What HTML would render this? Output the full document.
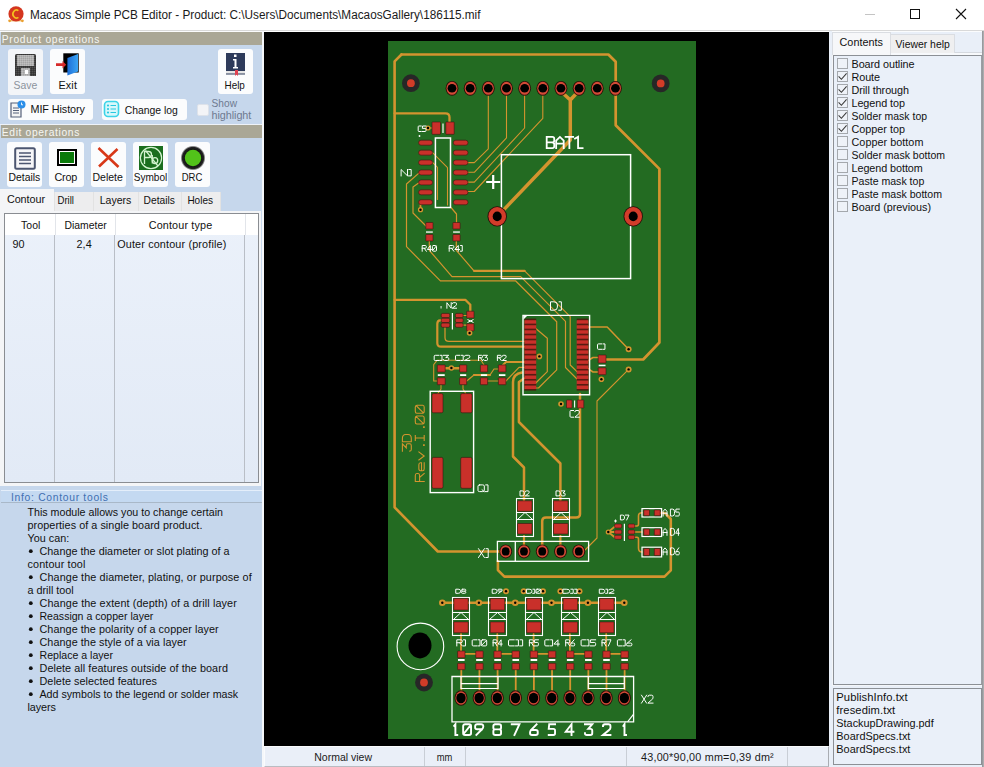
<!DOCTYPE html>
<html><head><meta charset="utf-8">
<style>
*{box-sizing:border-box;margin:0;padding:0}
html,body{width:984px;height:767px;overflow:hidden;background:#fff;font-family:"Liberation Sans",sans-serif;color:#000}
.a{position:absolute}
.t{position:absolute;white-space:pre;line-height:1}
.hdr{position:absolute;left:1px;width:261px;background:#aaa796;color:#f3f3f0;font-size:12px;line-height:13px;padding-left:1px;letter-spacing:0.2px}
.btn{position:absolute;background:#fbfcfd;border-radius:3px}
.btn.dis{background:#f3f5f8}
.lbl{position:absolute;font-size:11.5px;line-height:1;white-space:pre;text-align:center;left:0;right:0}
.tab{position:absolute;background:#f0f0f0;border:1px solid #dcdcdc;border-bottom:none;font-size:11.5px;line-height:1;white-space:pre}
.cb{position:absolute;width:11px;height:11px;border:1px solid #a4a8ad;background:#eef2f8}
.cl{position:absolute;font-size:11px;line-height:1;white-space:pre}
</style></head><body>
<!-- title bar -->
<div class="a" style="left:0;top:0;width:984px;height:30px;background:#fff"></div>
<svg class="a" style="left:7px;top:5px" width="18" height="18" viewBox="0 0 18 18">
 <path d="M2.5 15.8 H15.5" stroke="#e9a030" stroke-width="1"/>
 <circle cx="9" cy="8.8" r="7.6" fill="#d4361f"/>
 <circle cx="2.6" cy="15.8" r="1.4" fill="#eaa030"/><circle cx="15.4" cy="15.8" r="1.4" fill="#eaa030"/>
 <path d="M11.4 5.6 A3.6 4 0 1 0 11.4 12.4" fill="none" stroke="#f4c020" stroke-width="1.6"/>
</svg>
<div class="a" style="left:865px;top:14px;width:10px;height:1px;background:#c4c4c4"></div>
<div class="a" style="left:910px;top:9px;width:10px;height:10px;border:1px solid #111"></div>
<svg class="a" style="left:955px;top:8px" width="12" height="12" viewBox="0 0 12 12"><path d="M1 1L11 11M11 1L1 11" stroke="#111" stroke-width="1.1"/></svg>
<div class="a" style="left:0;top:30px;width:984px;height:1px;background:#d9d9d9"></div>

<!-- left panel -->
<div class="a" style="left:0;top:31px;width:263px;height:736px;background:#c6d7ec"></div>
<div class="a" style="left:262px;top:31px;width:2px;height:736px;background:#f5f7fa"></div>
<div class="a" style="left:0;top:31px;width:262px;height:1px;background:#fbfcfd"></div>
<div class="hdr" style="top:32px;height:13px"></div>
<div class="a" style="left:0;top:124px;width:262px;height:1px;background:#eef2f8"></div>
<div class="hdr" style="top:125px;height:13px"></div>

<!-- product ops buttons -->
<div class="btn dis" style="left:8px;top:49px;width:35px;height:46px"></div>
<svg class="a" style="left:14px;top:53px" width="24" height="24" viewBox="0 0 24 24">
 <defs><pattern id="dots" width="2" height="2" patternUnits="userSpaceOnUse"><rect width="2" height="2" fill="#fff"/><rect x="0.5" y="0.5" width="1.1" height="1.1" fill="#000"/></pattern>
 <pattern id="dots2" width="2" height="2" patternUnits="userSpaceOnUse"><rect width="2" height="2" fill="#222"/><rect x="0.5" y="0.5" width="0.8" height="0.8" fill="#ddd"/></pattern></defs>
 <path d="M2.5 1 H20.5 Q22 1 22 2.5 V23 H1 V2.5 Q1 1 2.5 1Z" fill="url(#dots2)"/>
 <rect x="3" y="2" width="17" height="11" fill="url(#dots)"/>
 <rect x="7" y="15" width="9" height="8" fill="url(#dots)"/>
 <rect x="11" y="17" width="3" height="4" fill="#fff"/>
</svg>

<div class="btn" style="left:50px;top:49px;width:35px;height:45px"></div>
<svg class="a" style="left:55px;top:52px" width="25" height="25" viewBox="0 0 25 25">
 <defs><linearGradient id="doorg" x1="0" x2="1" y1="0" y2="0"><stop offset="0" stop-color="#1f6fd8"/><stop offset="1" stop-color="#3aa4f4"/></linearGradient></defs>
 <rect x="8.3" y="1.3" width="15.4" height="19.2" fill="#000"/>
 <path d="M12.4 6 L23 2 V19.5 L12.4 23.6 Z" fill="url(#doorg)"/>
 <path d="M1 11.3 H7.5 V9 L11.2 12.7 L7.5 16.4 V14 H1 Z" fill="#d62a2a"/>
</svg>

<div class="btn" style="left:218px;top:49px;width:35px;height:45px"></div>
<svg class="a" style="left:225px;top:52px" width="21" height="26" viewBox="0 0 21 26">
 <rect x="1" y="1" width="19" height="18" fill="#2d3a5a"/>
 <path d="M1 19H20V22H1Z" fill="#e6e6e6"/>
 <path d="M1 22H20" stroke="#2d3a5a" stroke-width="1"/>
 <rect x="9" y="2.5" width="2.5" height="2.5" fill="#fff"/>
 <path d="M8 7H11.5V15H13V16.5H8V15H9.5V8.5H8Z" fill="#fff"/>
 <path d="M10 18H13V24L11.5 22.5L10 24Z" fill="#e04050"/>
</svg>

<div class="btn" style="left:8px;top:99px;width:85px;height:21px"></div>
<svg class="a" style="left:9px;top:100px" width="17" height="18" viewBox="0 0 17 18">
 <path d="M2 3H9L12 6V17H2Z" fill="#f4f4f4" stroke="#55607a" stroke-width="1.2"/>
 <path d="M4 8H10M4 10.5H10M4 13H10" stroke="#55607a" stroke-width="1"/>
 <circle cx="12.5" cy="4.5" r="4" fill="#2a8ee8"/>
 <path d="M12.5 2.5V4.8H14" stroke="#fff" stroke-width="0.9" fill="none"/>
</svg>

<div class="btn" style="left:102px;top:99px;width:85px;height:21px"></div>
<svg class="a" style="left:103px;top:100px" width="17" height="18" viewBox="0 0 17 18">
 <rect x="1.5" y="1.5" width="14" height="15" rx="3.5" fill="#d8f8fb" stroke="#3cd4e8" stroke-width="1.6"/>
 <circle cx="5" cy="5.5" r="1.1" fill="#28c8e0"/><circle cx="5" cy="9" r="1.1" fill="#28c8e0"/><circle cx="5" cy="12.5" r="1.1" fill="#28c8e0"/>
 <path d="M7.5 5.5H13M7.5 9H13M7.5 12.5H13" stroke="#28c8e0" stroke-width="1.2"/>
</svg>

<div class="a" style="left:197px;top:104px;width:12px;height:12px;background:#f3f4f7;border:1px solid #dde2ea;border-radius:2px"></div>

<!-- edit ops buttons -->
<div class="btn" style="left:7px;top:142px;width:35px;height:45px"></div>
<svg class="a" style="left:14px;top:147px" width="22" height="23" viewBox="0 0 22 23">
 <rect x="1.2" y="1.2" width="19.6" height="20.6" rx="1.5" fill="#f6f6f8" stroke="#4c5670" stroke-width="2"/>
 <path d="M5 6H17M5 9.5H17M5 13H17M5 16.5H17" stroke="#4c5670" stroke-width="1.6"/>
</svg>

<div class="btn" style="left:49px;top:142px;width:35px;height:45px"></div>
<svg class="a" style="left:56px;top:148px" width="22" height="19" viewBox="0 0 22 19">
 <rect x="1" y="1" width="20" height="17" fill="#000"/>
 <rect x="3" y="3" width="16" height="13" fill="#fff"/>
 <rect x="4" y="4" width="14" height="11" fill="#0a7a0a"/>
</svg>

<div class="btn" style="left:91px;top:142px;width:35px;height:45px"></div>
<svg class="a" style="left:96px;top:146px" width="25" height="23" viewBox="0 0 25 23">
 <path d="M2.5 2L22.5 21M21.5 3L3 20.5" stroke="#d83818" stroke-width="2.6" stroke-linecap="butt"/>
</svg>

<div class="btn" style="left:133px;top:142px;width:35px;height:45px"></div>
<svg class="a" style="left:139px;top:146px" width="24" height="24" viewBox="0 0 24 24">
 <rect x="0" y="0" width="24" height="24" fill="#1a6e1e"/>
 <circle cx="12" cy="12" r="10.6" fill="none" stroke="#d4f4d0" stroke-width="1.2"/>
 <path d="M5.5 18 V5.5 H9.5 Q12.5 5.5 12.5 8.5 Q12.5 11.5 9.5 11.5 H5.5" fill="none" stroke="#d4f4d0" stroke-width="1.3"/>
 <path d="M13.3 9 V17.5" stroke="#d4f4d0" stroke-width="1.3"/>
 <ellipse cx="16" cy="14.6" rx="2.7" ry="3" fill="none" stroke="#d4f4d0" stroke-width="1.3"/>
 <path d="M6.5 4.5 L19 20" stroke="#d4f4d0" stroke-width="1.2"/>
</svg>

<div class="btn" style="left:175px;top:142px;width:35px;height:45px"></div>
<svg class="a" style="left:180px;top:145px" width="26" height="26" viewBox="0 0 26 26">
 <defs><radialGradient id="drcg"><stop offset="0.62" stop-color="#111"/><stop offset="0.85" stop-color="#222"/><stop offset="1" stop-color="#222" stop-opacity="0"/></radialGradient></defs>
 <circle cx="13" cy="13" r="12.5" fill="url(#drcg)"/>
 <circle cx="13" cy="13" r="8.2" fill="#52c21a"/>
</svg>

<!-- tabs -->
<div class="a" style="left:0;top:189px;width:262px;height:297px;background:#c6d7ec"></div>
<div class="a" style="left:0;top:211px;width:261px;height:275px;background:#f4f5f7"></div>
<div class="a" style="left:0;top:189px;width:54px;height:23px;background:#f4f5f7"></div>
<div class="a" style="left:54px;top:192px;width:39px;height:19px;background:#ededee;border-left:1px solid #e2e2e2"></div>
<div class="a" style="left:93px;top:192px;width:45px;height:19px;background:#ededee;border-left:1px solid #e2e2e2"></div>
<div class="a" style="left:138px;top:192px;width:43px;height:19px;background:#ededee;border-left:1px solid #e2e2e2"></div>
<div class="a" style="left:181px;top:192px;width:40px;height:19px;background:#ededee;border-left:1px solid #e2e2e2;border-right:1px solid #e2e2e2"></div>

<!-- table -->
<div class="a" style="left:4px;top:213px;width:255px;height:270px;background:linear-gradient(#ebf1fa,#e2eaf6);border:1px solid #8a8d92"></div>
<div class="a" style="left:5px;top:214px;width:253px;height:21px;background:#fff"></div>
<div class="a" style="left:54px;top:235px;width:1px;height:247px;background:#b9bec6"></div><div class="a" style="left:55px;top:214px;width:1px;height:21px;background:#e2e5ea"></div>
<div class="a" style="left:114px;top:235px;width:1px;height:247px;background:#b9bec6"></div><div class="a" style="left:115px;top:214px;width:1px;height:21px;background:#e2e5ea"></div>
<div class="a" style="left:244px;top:235px;width:1px;height:247px;background:#b9bec6"></div><div class="a" style="left:245px;top:214px;width:1px;height:21px;background:#e2e5ea"></div>

<!-- info -->
<div class="a" style="left:1px;top:490px;width:261px;height:13px;background:#c4d9f1;border-top:1px solid #e4eefa;border-bottom:1px solid #a9b8c8"></div>


<!-- canvas -->
<div class="a" style="left:264px;top:32px;width:565px;height:714px;background:#000"></div>
<svg class="a" style="left:0;top:0" width="984" height="767" viewBox="0 0 984 767">
<rect x="388" y="41" width="308" height="698" fill="#236b22"/>
<path d="M401.5 54.5 H608.4 L615.7 61.8 V125.2 L659.4 168.9 V342.5 L643.2 359.5 H604" fill="none" stroke="#d3942f" stroke-width="2.7" stroke-linejoin="round" stroke-linecap="round"/>
<path d="M401.5 54.5 L394.6 61.4 V507.3 L437.8 551.5 H505" fill="none" stroke="#d3942f" stroke-width="2.6" stroke-linejoin="round" stroke-linecap="round"/>
<path d="M394.6 113.3 H445.5 Q449.5 113.3 449.5 117.3 V128" fill="none" stroke="#d3942f" stroke-width="2.3" stroke-linejoin="round" stroke-linecap="round"/>
<path d="M394.6 299.8 H465.3 L470.3 304.8 V313" fill="none" stroke="#d3942f" stroke-width="2.3" stroke-linejoin="round" stroke-linecap="round"/>
<path d="M488.3 92 V148.9 L474.3 162.6 H466" fill="none" stroke="#d3942f" stroke-width="1.1" stroke-linejoin="round" stroke-linecap="round"/>
<path d="M506.5 92 V137.8 L474.3 172.3 H466" fill="none" stroke="#d3942f" stroke-width="1.1" stroke-linejoin="round" stroke-linecap="round"/>
<path d="M524.6 92 V128 L474.3 182.1 H466" fill="none" stroke="#d3942f" stroke-width="1.1" stroke-linejoin="round" stroke-linecap="round"/>
<path d="M542.8 92 V118.3 L474.3 191.5 H466" fill="none" stroke="#d3942f" stroke-width="1.1" stroke-linejoin="round" stroke-linecap="round"/>
<path d="M560.5 91 L570.3 100 M578.7 91 L570.3 100 V140 L497.4 216.4" fill="none" stroke="#d3942f" stroke-width="3.5" stroke-linejoin="round" stroke-linecap="round"/>
<path d="M420 172.1 L406.5 184 V246.7 L440.4 280.8 H515.5 L556.7 321.8 V369.9 L538.5 388 H534" fill="none" stroke="#d3942f" stroke-width="1.2" stroke-linejoin="round" stroke-linecap="round"/>
<path d="M420 182 L413 187 V213 L426 226" fill="none" stroke="#d3942f" stroke-width="1.2" stroke-linejoin="round" stroke-linecap="round"/>
<path d="M429.3 240 V250.3 L452 276.6 H520.7 L565.5 321.4 V367.5 L577 379" fill="none" stroke="#d3942f" stroke-width="1.2" stroke-linejoin="round" stroke-linecap="round"/>
<path d="M456.3 240 V250.3 L474 270.8 H524.6 L570.2 316.6 V365 L577 371.6" fill="none" stroke="#d3942f" stroke-width="1.2" stroke-linejoin="round" stroke-linecap="round"/>
<path d="M474 270.8 H524.6" fill="none" stroke="#d3942f" stroke-width="2.3" stroke-linejoin="round" stroke-linecap="round"/>
<path d="M451 207.5 L456.5 214 V226" fill="none" stroke="#d3942f" stroke-width="1.2" stroke-linejoin="round" stroke-linecap="round"/>
<path d="M420.5 202.3 V209.7" fill="none" stroke="#d3942f" stroke-width="1.8" stroke-linejoin="round" stroke-linecap="round"/>
<path d="M432.5 152.6 L447.5 167.6 V205" fill="none" stroke="#d3942f" stroke-width="1.1" stroke-linejoin="round" stroke-linecap="round"/>
<path d="M432.5 162.4 L437.5 167.4 V199.5" fill="none" stroke="#d3942f" stroke-width="1.1" stroke-linejoin="round" stroke-linecap="round"/>
<path d="M441.2 320.4 H440 Q437.3 320.4 437.3 324 V343 Q437.3 346.7 441 346.7 H524" fill="none" stroke="#d3942f" stroke-width="2.2" stroke-linejoin="round" stroke-linecap="round"/>
<path d="M445 325.2 V337.5 Q445 341.4 449 341.4 H524" fill="none" stroke="#d3942f" stroke-width="1.3" stroke-linejoin="round" stroke-linecap="round"/>
<path d="M463 315.5 H467 M463 325.2 H467" fill="none" stroke="#d3942f" stroke-width="1.2" stroke-linejoin="round" stroke-linecap="round"/>
<path d="M445.2 368.2 H459.6" fill="none" stroke="#d3942f" stroke-width="2.4" stroke-linejoin="round" stroke-linecap="round"/>
<path d="M437.3 381 H433.7 V364.6 L437 360.3 H481 L484 365" fill="none" stroke="#d3942f" stroke-width="1.1" stroke-linejoin="round" stroke-linecap="round"/>
<path d="M466.7 381 L474 375 H490 L494 369 H499" fill="none" stroke="#d3942f" stroke-width="1.2" stroke-linejoin="round" stroke-linecap="round"/>
<path d="M474 375 H490" fill="none" stroke="#d3942f" stroke-width="2.2" stroke-linejoin="round" stroke-linecap="round"/>
<path d="M487.6 381 H499" fill="none" stroke="#d3942f" stroke-width="1.2" stroke-linejoin="round" stroke-linecap="round"/>
<path d="M505.9 381 L519 367.4 H524" fill="none" stroke="#d3942f" stroke-width="1.2" stroke-linejoin="round" stroke-linecap="round"/>
<path d="M503 365 L506 362 H524" fill="none" stroke="#d3942f" stroke-width="2.0" stroke-linejoin="round" stroke-linecap="round"/>
<path d="M441 384.7 V389 L437.5 394 M463 384.7 V389 L466 394" fill="none" stroke="#d3942f" stroke-width="1.1" stroke-linejoin="round" stroke-linecap="round"/>
<path d="M534 327 L547.3 338.2 V371.6 L536 382.8" fill="none" stroke="#d3942f" stroke-width="1.2" stroke-linejoin="round" stroke-linecap="round"/>
<path d="M588 327 H607.2 L628.6 349.3" fill="none" stroke="#d3942f" stroke-width="1.5" stroke-linejoin="round" stroke-linecap="round"/>
<path d="M588 360.5 L593 357.5 H599 M588 368.7 L593 372 H599" fill="none" stroke="#d3942f" stroke-width="1.6" stroke-linejoin="round" stroke-linecap="round"/>
<path d="M580 394 V514 Q580 517.5 576 517.5 H546 Q542.2 517.5 542.2 521 V546" fill="none" stroke="#d3942f" stroke-width="2.5" stroke-linejoin="round" stroke-linecap="round"/>
<path d="M522 372.5 Q513 374 513 382 V456.5 L524 467.5 V500" fill="none" stroke="#d3942f" stroke-width="2.5" stroke-linejoin="round" stroke-linecap="round"/>
<path d="M524 378.5 L518.9 382 V422 L560.4 463.5 V500" fill="none" stroke="#d3942f" stroke-width="2.5" stroke-linejoin="round" stroke-linecap="round"/>
<path d="M524 536 V546 M560.4 536 V546" fill="none" stroke="#d3942f" stroke-width="2.2" stroke-linejoin="round" stroke-linecap="round"/>
<path d="M628.6 369.4 L597 401 V538 L584.5 550.5" fill="none" stroke="#d3942f" stroke-width="1.1" stroke-linejoin="round" stroke-linecap="round"/>
<path d="M497.9 561 V570.1 L504.4 576.6 H664.5 L670.8 570.3 V519 L665 513 H661" fill="none" stroke="#d3942f" stroke-width="2.6" stroke-linejoin="round" stroke-linecap="round"/>
<path d="M634.7 526 H637 Q638.5 526 638.5 524 V516 Q638.5 512.8 642 512.8" fill="none" stroke="#d3942f" stroke-width="1.6" stroke-linejoin="round" stroke-linecap="round"/>
<path d="M634.7 532 H642" fill="none" stroke="#d3942f" stroke-width="1.6" stroke-linejoin="round" stroke-linecap="round"/>
<path d="M634.7 537.3 H637 Q638.5 537.3 638.5 539.3 V548 Q638.5 552 642 552" fill="none" stroke="#d3942f" stroke-width="1.6" stroke-linejoin="round" stroke-linecap="round"/>
<path d="M608.3 532 L615 526.4 M608.3 532 H615 M608.3 532 L615 537.5" fill="none" stroke="#d3942f" stroke-width="1.8" stroke-linejoin="round" stroke-linecap="round"/>
<path d="M442 602.7 H624.3" fill="none" stroke="#d3942f" stroke-width="2.6" stroke-linejoin="round" stroke-linecap="round"/>
<path d="M461.00 634 V652" fill="none" stroke="#d3942f" stroke-width="1.8" stroke-linejoin="round" stroke-linecap="round"/>
<path d="M497.30 634 V652" fill="none" stroke="#d3942f" stroke-width="1.8" stroke-linejoin="round" stroke-linecap="round"/>
<path d="M533.60 634 V652" fill="none" stroke="#d3942f" stroke-width="1.8" stroke-linejoin="round" stroke-linecap="round"/>
<path d="M569.90 634 V652" fill="none" stroke="#d3942f" stroke-width="1.8" stroke-linejoin="round" stroke-linecap="round"/>
<path d="M606.20 634 V652" fill="none" stroke="#d3942f" stroke-width="1.8" stroke-linejoin="round" stroke-linecap="round"/>
<path d="M461.30 668 V692" fill="none" stroke="#d3942f" stroke-width="1.8" stroke-linejoin="round" stroke-linecap="round"/>
<path d="M479.45 668 V692" fill="none" stroke="#d3942f" stroke-width="1.8" stroke-linejoin="round" stroke-linecap="round"/>
<path d="M497.60 668 V692" fill="none" stroke="#d3942f" stroke-width="1.8" stroke-linejoin="round" stroke-linecap="round"/>
<path d="M515.75 668 V692" fill="none" stroke="#d3942f" stroke-width="1.8" stroke-linejoin="round" stroke-linecap="round"/>
<path d="M533.90 668 V692" fill="none" stroke="#d3942f" stroke-width="1.8" stroke-linejoin="round" stroke-linecap="round"/>
<path d="M552.05 668 V692" fill="none" stroke="#d3942f" stroke-width="1.8" stroke-linejoin="round" stroke-linecap="round"/>
<path d="M570.20 668 V692" fill="none" stroke="#d3942f" stroke-width="1.8" stroke-linejoin="round" stroke-linecap="round"/>
<path d="M588.35 668 V692" fill="none" stroke="#d3942f" stroke-width="1.8" stroke-linejoin="round" stroke-linecap="round"/>
<path d="M606.50 668 V692" fill="none" stroke="#d3942f" stroke-width="1.8" stroke-linejoin="round" stroke-linecap="round"/>
<path d="M624.65 668 V692" fill="none" stroke="#d3942f" stroke-width="1.8" stroke-linejoin="round" stroke-linecap="round"/>
<path d="M461.30 653.9 H479.45" fill="none" stroke="#d3942f" stroke-width="1.6" stroke-linejoin="round" stroke-linecap="round"/>
<path d="M497.60 653.9 H515.75" fill="none" stroke="#d3942f" stroke-width="1.6" stroke-linejoin="round" stroke-linecap="round"/>
<path d="M533.90 653.9 H552.05" fill="none" stroke="#d3942f" stroke-width="1.6" stroke-linejoin="round" stroke-linecap="round"/>
<path d="M570.20 653.9 H588.35" fill="none" stroke="#d3942f" stroke-width="1.6" stroke-linejoin="round" stroke-linecap="round"/>
<path d="M606.50 653.9 H624.65" fill="none" stroke="#d3942f" stroke-width="1.6" stroke-linejoin="round" stroke-linecap="round"/>
<path d="M428 128 H432" fill="none" stroke="#d3942f" stroke-width="1.2" stroke-linejoin="round" stroke-linecap="round"/>
<circle cx="410.9" cy="83.2" r="8.9" fill="#272727"/>
<circle cx="410.9" cy="83.2" r="3.9" fill="#d23c28"/>
<circle cx="660.7" cy="83.4" r="8.9" fill="#272727"/>
<circle cx="660.7" cy="83.4" r="3.9" fill="#d23c28"/>
<circle cx="424" cy="682.5" r="8.9" fill="#272727"/>
<circle cx="424" cy="682.5" r="3.9" fill="#d23c28"/>
<circle cx="420.4" cy="646.4" r="23.3" fill="none" stroke="#ffffff" stroke-width="1.1"/>
<ellipse cx="420" cy="645.5" rx="11.5" ry="12.9" fill="#000"/>
<ellipse cx="452.00" cy="88.30" rx="6.4" ry="7.4" fill="#2a0e08"/>
<ellipse cx="452.00" cy="88.30" rx="5.5" ry="6.5" fill="#d24a36"/>
<ellipse cx="452.00" cy="88.30" rx="4.4" ry="4.3" fill="#000"/>
<ellipse cx="470.16" cy="88.30" rx="6.4" ry="7.4" fill="#2a0e08"/>
<ellipse cx="470.16" cy="88.30" rx="5.5" ry="6.5" fill="#d24a36"/>
<ellipse cx="470.16" cy="88.30" rx="4.4" ry="4.3" fill="#000"/>
<ellipse cx="488.32" cy="88.30" rx="6.4" ry="7.4" fill="#2a0e08"/>
<ellipse cx="488.32" cy="88.30" rx="5.5" ry="6.5" fill="#d24a36"/>
<ellipse cx="488.32" cy="88.30" rx="4.4" ry="4.3" fill="#000"/>
<ellipse cx="506.48" cy="88.30" rx="6.4" ry="7.4" fill="#2a0e08"/>
<ellipse cx="506.48" cy="88.30" rx="5.5" ry="6.5" fill="#d24a36"/>
<ellipse cx="506.48" cy="88.30" rx="4.4" ry="4.3" fill="#000"/>
<ellipse cx="524.64" cy="88.30" rx="6.4" ry="7.4" fill="#2a0e08"/>
<ellipse cx="524.64" cy="88.30" rx="5.5" ry="6.5" fill="#d24a36"/>
<ellipse cx="524.64" cy="88.30" rx="4.4" ry="4.3" fill="#000"/>
<ellipse cx="542.80" cy="88.30" rx="6.4" ry="7.4" fill="#2a0e08"/>
<ellipse cx="542.80" cy="88.30" rx="5.5" ry="6.5" fill="#d24a36"/>
<ellipse cx="542.80" cy="88.30" rx="4.4" ry="4.3" fill="#000"/>
<ellipse cx="560.96" cy="88.30" rx="6.4" ry="7.4" fill="#2a0e08"/>
<ellipse cx="560.96" cy="88.30" rx="5.5" ry="6.5" fill="#d24a36"/>
<ellipse cx="560.96" cy="88.30" rx="4.4" ry="4.3" fill="#000"/>
<ellipse cx="579.12" cy="88.30" rx="6.4" ry="7.4" fill="#2a0e08"/>
<ellipse cx="579.12" cy="88.30" rx="5.5" ry="6.5" fill="#d24a36"/>
<ellipse cx="579.12" cy="88.30" rx="4.4" ry="4.3" fill="#000"/>
<ellipse cx="597.28" cy="88.30" rx="6.4" ry="7.4" fill="#2a0e08"/>
<ellipse cx="597.28" cy="88.30" rx="5.5" ry="6.5" fill="#d24a36"/>
<ellipse cx="597.28" cy="88.30" rx="4.4" ry="4.3" fill="#000"/>
<ellipse cx="615.44" cy="88.30" rx="6.4" ry="7.4" fill="#2a0e08"/>
<ellipse cx="615.44" cy="88.30" rx="5.5" ry="6.5" fill="#d24a36"/>
<ellipse cx="615.44" cy="88.30" rx="4.4" ry="4.3" fill="#000"/>
<rect x="501.40" y="154.70" width="129.20" height="123.90" fill="none" stroke="#ffffff" stroke-width="1.5"/>
<ellipse cx="497.20" cy="216.40" rx="9.700000000000001" ry="10.200000000000001" fill="#2a0e08"/>
<ellipse cx="497.20" cy="216.40" rx="8.8" ry="9.3" fill="#d23c2a"/>
<ellipse cx="497.20" cy="216.40" rx="4.5" ry="4.9" fill="#000"/>
<ellipse cx="633.20" cy="216.40" rx="9.700000000000001" ry="10.200000000000001" fill="#2a0e08"/>
<ellipse cx="633.20" cy="216.40" rx="8.8" ry="9.3" fill="#d23c2a"/>
<ellipse cx="633.20" cy="216.40" rx="4.5" ry="4.9" fill="#000"/>
<path d="M486.2 182 H500.2 M493.2 175 V189" fill="none" stroke="#ffffff" stroke-width="2.2"/>
<rect x="432.00" y="122.00" width="8.50" height="12.30" rx="0.5" fill="#c9302a" stroke="#3a1410" stroke-width="0.6"/>
<rect x="445.80" y="122.00" width="8.40" height="12.30" rx="0.5" fill="#c9302a" stroke="#3a1410" stroke-width="0.6"/>
<path d="M443 123.5 V133" fill="none" stroke="#ffffff" stroke-width="1.2"/>
<circle cx="428.00" cy="128.00" r="2.6" fill="#d3942f"/>
<circle cx="428.00" cy="128.00" r="1.2" fill="#000"/>
<rect x="418.60" y="140.20" width="13.90" height="5.00" rx="2.5" fill="#c9302a" stroke="#3a1410" stroke-width="0.6"/>
<rect x="453.30" y="140.20" width="14.70" height="5.00" rx="2.5" fill="#c9302a" stroke="#3a1410" stroke-width="0.6"/>
<rect x="418.60" y="150.13" width="13.90" height="5.00" rx="2.5" fill="#c9302a" stroke="#3a1410" stroke-width="0.6"/>
<rect x="453.30" y="150.13" width="14.70" height="5.00" rx="2.5" fill="#c9302a" stroke="#3a1410" stroke-width="0.6"/>
<rect x="418.60" y="160.06" width="13.90" height="5.00" rx="2.5" fill="#c9302a" stroke="#3a1410" stroke-width="0.6"/>
<rect x="453.30" y="160.06" width="14.70" height="5.00" rx="2.5" fill="#c9302a" stroke="#3a1410" stroke-width="0.6"/>
<rect x="418.60" y="169.99" width="13.90" height="5.00" rx="2.5" fill="#c9302a" stroke="#3a1410" stroke-width="0.6"/>
<rect x="453.30" y="169.99" width="14.70" height="5.00" rx="2.5" fill="#c9302a" stroke="#3a1410" stroke-width="0.6"/>
<rect x="418.60" y="179.92" width="13.90" height="5.00" rx="2.5" fill="#c9302a" stroke="#3a1410" stroke-width="0.6"/>
<rect x="453.30" y="179.92" width="14.70" height="5.00" rx="2.5" fill="#c9302a" stroke="#3a1410" stroke-width="0.6"/>
<rect x="418.60" y="189.85" width="13.90" height="5.00" rx="2.5" fill="#c9302a" stroke="#3a1410" stroke-width="0.6"/>
<rect x="453.30" y="189.85" width="14.70" height="5.00" rx="2.5" fill="#c9302a" stroke="#3a1410" stroke-width="0.6"/>
<rect x="418.60" y="199.78" width="13.90" height="5.00" rx="2.5" fill="#c9302a" stroke="#3a1410" stroke-width="0.6"/>
<rect x="453.30" y="199.78" width="14.70" height="5.00" rx="2.5" fill="#c9302a" stroke="#3a1410" stroke-width="0.6"/>
<path d="M435.4 138 H450.5 V207.5 H435.4 Z" fill="none" stroke="#ffffff" stroke-width="1.5"/>
<circle cx="419.5" cy="136" r="0.9" fill="#ffffff"/>
<circle cx="420.50" cy="209.70" r="2.6" fill="#d3942f"/>
<circle cx="420.50" cy="209.70" r="1.2" fill="#000"/>
<rect x="425.80" y="222.50" width="7.20" height="6.50" rx="0.5" fill="#c9302a" stroke="#3a1410" stroke-width="0.6"/>
<rect x="425.80" y="234.50" width="7.20" height="6.50" rx="0.5" fill="#c9302a" stroke="#3a1410" stroke-width="0.6"/>
<rect x="426.0" y="231.4" width="6.8" height="1.3" fill="#ffffff"/>
<rect x="452.90" y="222.50" width="7.20" height="6.50" rx="0.5" fill="#c9302a" stroke="#3a1410" stroke-width="0.6"/>
<rect x="452.90" y="234.50" width="7.20" height="6.50" rx="0.5" fill="#c9302a" stroke="#3a1410" stroke-width="0.6"/>
<rect x="453.1" y="231.4" width="6.8" height="1.3" fill="#ffffff"/>
<rect x="441.20" y="313.40" width="8.60" height="4.20" rx="1.5" fill="#c9302a" stroke="#3a1410" stroke-width="0.6"/>
<rect x="455.30" y="313.40" width="7.90" height="4.20" rx="1.5" fill="#c9302a" stroke="#3a1410" stroke-width="0.6"/>
<rect x="441.20" y="318.30" width="8.60" height="4.20" rx="1.5" fill="#c9302a" stroke="#3a1410" stroke-width="0.6"/>
<rect x="455.30" y="318.30" width="7.90" height="4.20" rx="1.5" fill="#c9302a" stroke="#3a1410" stroke-width="0.6"/>
<rect x="441.20" y="323.10" width="8.60" height="4.20" rx="1.5" fill="#c9302a" stroke="#3a1410" stroke-width="0.6"/>
<rect x="455.30" y="323.10" width="7.90" height="4.20" rx="1.5" fill="#c9302a" stroke="#3a1410" stroke-width="0.6"/>
<path d="M452.4 313 V329.5" fill="none" stroke="#ffffff" stroke-width="1.2"/>
<rect x="466.70" y="311.20" width="7.30" height="6.80" rx="0.5" fill="#c9302a" stroke="#3a1410" stroke-width="0.6"/>
<rect x="466.70" y="323.70" width="7.30" height="7.20" rx="0.5" fill="#c9302a" stroke="#3a1410" stroke-width="0.6"/>
<path d="M467.5 319.5 L473.5 322.5 M467.5 322.5 L473.5 319.5" fill="none" stroke="#ffffff" stroke-width="1.0"/>
<circle cx="469.60" cy="333.00" r="2.8" fill="#d3942f"/>
<circle cx="469.60" cy="333.00" r="1.2" fill="#000"/>
<rect x="440.6" y="306" width="0.9" height="2.5" fill="#ffffff"/>
<rect x="437.30" y="364.90" width="7.90" height="7.10" rx="0.5" fill="#c9302a" stroke="#3a1410" stroke-width="0.6"/>
<rect x="437.30" y="377.80" width="7.90" height="6.90" rx="0.5" fill="#c9302a" stroke="#3a1410" stroke-width="0.6"/>
<rect x="437.8" y="374.2" width="6.9" height="1.8" fill="#ffffff"/>
<rect x="459.60" y="364.90" width="7.10" height="7.10" rx="0.5" fill="#c9302a" stroke="#3a1410" stroke-width="0.6"/>
<rect x="459.60" y="377.80" width="7.10" height="6.90" rx="0.5" fill="#c9302a" stroke="#3a1410" stroke-width="0.6"/>
<rect x="460.1" y="374.2" width="6.1" height="1.8" fill="#ffffff"/>
<rect x="480.40" y="364.90" width="7.20" height="7.10" rx="0.5" fill="#c9302a" stroke="#3a1410" stroke-width="0.6"/>
<rect x="480.40" y="377.80" width="7.20" height="6.90" rx="0.5" fill="#c9302a" stroke="#3a1410" stroke-width="0.6"/>
<rect x="480.9" y="374.2" width="6.2" height="1.8" fill="#ffffff"/>
<rect x="498.40" y="364.90" width="7.50" height="7.10" rx="0.5" fill="#c9302a" stroke="#3a1410" stroke-width="0.6"/>
<rect x="498.40" y="377.80" width="7.50" height="6.90" rx="0.5" fill="#c9302a" stroke="#3a1410" stroke-width="0.6"/>
<rect x="498.9" y="374.2" width="6.5" height="1.8" fill="#ffffff"/>
<circle cx="451.40" cy="368.00" r="2.8" fill="#d3942f"/>
<circle cx="451.40" cy="368.00" r="1.2" fill="#000"/>
<rect x="430.20" y="391.30" width="43.40" height="101.30" fill="none" stroke="#ffffff" stroke-width="1.4"/>
<rect x="432.00" y="393.60" width="11.00" height="19.20" rx="1.5" fill="#c9302a" stroke="#3a1410" stroke-width="0.6"/>
<rect x="460.70" y="393.60" width="11.30" height="19.20" rx="1.5" fill="#c9302a" stroke="#3a1410" stroke-width="0.6"/>
<rect x="432.00" y="457.40" width="11.00" height="30.90" rx="1.5" fill="#c9302a" stroke="#3a1410" stroke-width="0.6"/>
<rect x="460.70" y="457.40" width="11.30" height="30.90" rx="1.5" fill="#c9302a" stroke="#3a1410" stroke-width="0.6"/>
<rect x="524.4" y="319.4" width="11.8" height="70.4" rx="1.5" fill="#c9302a"/>
<rect x="524.4" y="318.60" width="11.8" height="1.6" fill="#4a1a10" opacity="0.9"/>
<rect x="524.4" y="323.63" width="11.8" height="1.6" fill="#4a1a10" opacity="0.9"/>
<rect x="524.4" y="328.66" width="11.8" height="1.6" fill="#4a1a10" opacity="0.9"/>
<rect x="524.4" y="333.69" width="11.8" height="1.6" fill="#4a1a10" opacity="0.9"/>
<rect x="524.4" y="338.72" width="11.8" height="1.6" fill="#4a1a10" opacity="0.9"/>
<rect x="524.4" y="343.75" width="11.8" height="1.6" fill="#4a1a10" opacity="0.9"/>
<rect x="524.4" y="348.78" width="11.8" height="1.6" fill="#4a1a10" opacity="0.9"/>
<rect x="524.4" y="353.81" width="11.8" height="1.6" fill="#4a1a10" opacity="0.9"/>
<rect x="524.4" y="358.84" width="11.8" height="1.6" fill="#4a1a10" opacity="0.9"/>
<rect x="524.4" y="363.87" width="11.8" height="1.6" fill="#4a1a10" opacity="0.9"/>
<rect x="524.4" y="368.90" width="11.8" height="1.6" fill="#4a1a10" opacity="0.9"/>
<rect x="524.4" y="373.93" width="11.8" height="1.6" fill="#4a1a10" opacity="0.9"/>
<rect x="524.4" y="378.96" width="11.8" height="1.6" fill="#4a1a10" opacity="0.9"/>
<rect x="524.4" y="383.99" width="11.8" height="1.6" fill="#4a1a10" opacity="0.9"/>
<rect x="524.4" y="389.02" width="11.8" height="1.6" fill="#4a1a10" opacity="0.9"/>
<rect x="576.7" y="319.4" width="11.8" height="70.4" rx="1.5" fill="#c9302a"/>
<rect x="576.7" y="318.60" width="11.8" height="1.6" fill="#4a1a10" opacity="0.9"/>
<rect x="576.7" y="323.63" width="11.8" height="1.6" fill="#4a1a10" opacity="0.9"/>
<rect x="576.7" y="328.66" width="11.8" height="1.6" fill="#4a1a10" opacity="0.9"/>
<rect x="576.7" y="333.69" width="11.8" height="1.6" fill="#4a1a10" opacity="0.9"/>
<rect x="576.7" y="338.72" width="11.8" height="1.6" fill="#4a1a10" opacity="0.9"/>
<rect x="576.7" y="343.75" width="11.8" height="1.6" fill="#4a1a10" opacity="0.9"/>
<rect x="576.7" y="348.78" width="11.8" height="1.6" fill="#4a1a10" opacity="0.9"/>
<rect x="576.7" y="353.81" width="11.8" height="1.6" fill="#4a1a10" opacity="0.9"/>
<rect x="576.7" y="358.84" width="11.8" height="1.6" fill="#4a1a10" opacity="0.9"/>
<rect x="576.7" y="363.87" width="11.8" height="1.6" fill="#4a1a10" opacity="0.9"/>
<rect x="576.7" y="368.90" width="11.8" height="1.6" fill="#4a1a10" opacity="0.9"/>
<rect x="576.7" y="373.93" width="11.8" height="1.6" fill="#4a1a10" opacity="0.9"/>
<rect x="576.7" y="378.96" width="11.8" height="1.6" fill="#4a1a10" opacity="0.9"/>
<rect x="576.7" y="383.99" width="11.8" height="1.6" fill="#4a1a10" opacity="0.9"/>
<rect x="576.7" y="389.02" width="11.8" height="1.6" fill="#4a1a10" opacity="0.9"/>
<path d="M523 315.4 H589.6 V394.7 H523 Z" fill="none" stroke="#ffffff" stroke-width="1.4"/>
<path d="M523.5 316 H527 L523.5 319.5 Z" fill="#ffffff"/>
<circle cx="539.40" cy="356.40" r="2.8" fill="#d3942f"/>
<circle cx="539.40" cy="356.40" r="1.2" fill="#000"/>
<rect x="598.20" y="355.00" width="7.80" height="8.00" rx="0.5" fill="#c9302a" stroke="#3a1410" stroke-width="0.6"/>
<rect x="598.20" y="367.80" width="7.80" height="6.90" rx="0.5" fill="#c9302a" stroke="#3a1410" stroke-width="0.6"/>
<rect x="598.7" y="364.7" width="6.8" height="1.5" fill="#ffffff"/>
<circle cx="601.40" cy="379.20" r="2.8" fill="#d3942f"/>
<circle cx="601.40" cy="379.20" r="1.2" fill="#000"/>
<circle cx="628.60" cy="349.30" r="3.0" fill="#d3942f"/>
<circle cx="628.60" cy="349.30" r="1.2" fill="#000"/>
<circle cx="628.60" cy="369.40" r="3.0" fill="#d3942f"/>
<circle cx="628.60" cy="369.40" r="1.2" fill="#000"/>
<rect x="566.50" y="400.00" width="5.50" height="8.00" rx="0.5" fill="#c9302a" stroke="#3a1410" stroke-width="0.6"/>
<rect x="577.30" y="400.00" width="6.50" height="8.00" rx="0.5" fill="#c9302a" stroke="#3a1410" stroke-width="0.6"/>
<path d="M574.6 400.5 V407.5" fill="none" stroke="#ffffff" stroke-width="1.1"/>
<circle cx="561.00" cy="404.00" r="2.8" fill="#d3942f"/>
<circle cx="561.00" cy="404.00" r="1.2" fill="#000"/>
<rect x="516.50" y="498.50" width="17.00" height="38.00" fill="none" stroke="#ffffff" stroke-width="1.1"/>
<rect x="517.50" y="500.80" width="14.50" height="10.50" rx="0.5" fill="#c9302a" stroke="#3a1410" stroke-width="0.6"/>
<rect x="517.50" y="523.50" width="14.50" height="10.50" rx="0.5" fill="#c9302a" stroke="#3a1410" stroke-width="0.6"/>
<path d="M516.5 512.5 H533.5 M516.5 519.5 H533.5 M517.5 519.5 L525.0 512.5 L532.5 519.5" fill="none" stroke="#ffffff" stroke-width="1.0"/>
<rect x="552.50" y="498.50" width="17.00" height="38.00" fill="none" stroke="#ffffff" stroke-width="1.1"/>
<rect x="553.50" y="500.80" width="14.50" height="10.50" rx="0.5" fill="#c9302a" stroke="#3a1410" stroke-width="0.6"/>
<rect x="553.50" y="523.50" width="14.50" height="10.50" rx="0.5" fill="#c9302a" stroke="#3a1410" stroke-width="0.6"/>
<path d="M552.5 512.5 H569.5 M552.5 519.5 H569.5 M553.5 519.5 L561.0 512.5 L568.5 519.5" fill="none" stroke="#ffffff" stroke-width="1.0"/>
<rect x="497.40" y="541.40" width="91.20" height="19.90" fill="none" stroke="#ffffff" stroke-width="1.3"/>
<path d="M515.3 541.4 V561.3" fill="none" stroke="#ffffff" stroke-width="1.3"/>
<ellipse cx="505.70" cy="551.40" rx="6.4" ry="7.0" fill="#2a0e08"/>
<ellipse cx="505.70" cy="551.40" rx="5.5" ry="6.1" fill="#d24a36"/>
<ellipse cx="505.70" cy="551.40" rx="3.9" ry="4.2" fill="#000"/>
<ellipse cx="523.97" cy="551.40" rx="6.4" ry="7.0" fill="#2a0e08"/>
<ellipse cx="523.97" cy="551.40" rx="5.5" ry="6.1" fill="#d24a36"/>
<ellipse cx="523.97" cy="551.40" rx="3.9" ry="4.2" fill="#000"/>
<ellipse cx="542.24" cy="551.40" rx="6.4" ry="7.0" fill="#2a0e08"/>
<ellipse cx="542.24" cy="551.40" rx="5.5" ry="6.1" fill="#d24a36"/>
<ellipse cx="542.24" cy="551.40" rx="3.9" ry="4.2" fill="#000"/>
<ellipse cx="560.51" cy="551.40" rx="6.4" ry="7.0" fill="#2a0e08"/>
<ellipse cx="560.51" cy="551.40" rx="5.5" ry="6.1" fill="#d24a36"/>
<ellipse cx="560.51" cy="551.40" rx="3.9" ry="4.2" fill="#000"/>
<ellipse cx="578.78" cy="551.40" rx="6.4" ry="7.0" fill="#2a0e08"/>
<ellipse cx="578.78" cy="551.40" rx="5.5" ry="6.1" fill="#d24a36"/>
<ellipse cx="578.78" cy="551.40" rx="3.9" ry="4.2" fill="#000"/>
<rect x="614.60" y="524.00" width="7.10" height="4.00" rx="1.2" fill="#c9302a" stroke="#3a1410" stroke-width="0.6"/>
<rect x="628.20" y="524.00" width="6.50" height="4.00" rx="1.2" fill="#c9302a" stroke="#3a1410" stroke-width="0.6"/>
<rect x="614.60" y="530.00" width="7.10" height="4.00" rx="1.2" fill="#c9302a" stroke="#3a1410" stroke-width="0.6"/>
<rect x="628.20" y="530.00" width="6.50" height="4.00" rx="1.2" fill="#c9302a" stroke="#3a1410" stroke-width="0.6"/>
<rect x="614.60" y="535.30" width="7.10" height="4.00" rx="1.2" fill="#c9302a" stroke="#3a1410" stroke-width="0.6"/>
<rect x="628.20" y="535.30" width="6.50" height="4.00" rx="1.2" fill="#c9302a" stroke="#3a1410" stroke-width="0.6"/>
<path d="M624.4 523.8 V541" fill="none" stroke="#ffffff" stroke-width="1.2"/>
<circle cx="608.30" cy="532.00" r="2.6" fill="#d3942f"/>
<circle cx="608.30" cy="532.00" r="1.2" fill="#000"/>
<path d="M614 521 H617 M615.5 519.5 V522.5" fill="none" stroke="#ffffff" stroke-width="0.9"/>
<rect x="642.00" y="508.60" width="19.60" height="8.40" fill="none" stroke="#ffffff" stroke-width="1.2"/>
<rect x="643.80" y="509.90" width="5.70" height="5.80" rx="0.5" fill="#c9302a" stroke="#3a1410" stroke-width="0.6"/>
<rect x="654.30" y="509.90" width="5.90" height="5.80" rx="0.5" fill="#c9302a" stroke="#3a1410" stroke-width="0.6"/>
<rect x="642.00" y="527.70" width="19.60" height="8.80" fill="none" stroke="#ffffff" stroke-width="1.2"/>
<rect x="643.80" y="529.00" width="5.70" height="6.20" rx="0.5" fill="#c9302a" stroke="#3a1410" stroke-width="0.6"/>
<rect x="654.30" y="529.00" width="5.90" height="6.20" rx="0.5" fill="#c9302a" stroke="#3a1410" stroke-width="0.6"/>
<rect x="642.00" y="547.20" width="19.60" height="9.70" fill="none" stroke="#ffffff" stroke-width="1.2"/>
<rect x="643.80" y="548.50" width="5.70" height="7.10" rx="0.5" fill="#c9302a" stroke="#3a1410" stroke-width="0.6"/>
<rect x="654.30" y="548.50" width="5.90" height="7.10" rx="0.5" fill="#c9302a" stroke="#3a1410" stroke-width="0.6"/>
<rect x="452.50" y="597.50" width="17.00" height="38.00" fill="none" stroke="#ffffff" stroke-width="1.1"/>
<rect x="453.80" y="598.40" width="14.40" height="11.60" rx="0.5" fill="#c9302a" stroke="#3a1410" stroke-width="0.6"/>
<rect x="453.80" y="621.90" width="14.40" height="10.90" rx="0.5" fill="#c9302a" stroke="#3a1410" stroke-width="0.6"/>
<path d="M452.5 612.5 H469.5 M452.5 619.5 H469.5 M453.5 619.5 L461.0 612.5 L468.5 619.5" fill="none" stroke="#ffffff" stroke-width="1.0"/>
<rect x="488.50" y="597.50" width="18.00" height="38.00" fill="none" stroke="#ffffff" stroke-width="1.1"/>
<rect x="490.25" y="598.40" width="14.40" height="11.60" rx="0.5" fill="#c9302a" stroke="#3a1410" stroke-width="0.6"/>
<rect x="490.25" y="621.90" width="14.40" height="10.90" rx="0.5" fill="#c9302a" stroke="#3a1410" stroke-width="0.6"/>
<path d="M488.5 612.5 H506.5 M488.5 619.5 H506.5 M489.5 619.5 L497.5 612.5 L505.5 619.5" fill="none" stroke="#ffffff" stroke-width="1.0"/>
<rect x="525.50" y="597.50" width="17.00" height="38.00" fill="none" stroke="#ffffff" stroke-width="1.1"/>
<rect x="526.70" y="598.40" width="14.40" height="11.60" rx="0.5" fill="#c9302a" stroke="#3a1410" stroke-width="0.6"/>
<rect x="526.70" y="621.90" width="14.40" height="10.90" rx="0.5" fill="#c9302a" stroke="#3a1410" stroke-width="0.6"/>
<path d="M525.5 612.5 H542.5 M525.5 619.5 H542.5 M526.5 619.5 L534.0 612.5 L541.5 619.5" fill="none" stroke="#ffffff" stroke-width="1.0"/>
<rect x="561.50" y="597.50" width="18.00" height="38.00" fill="none" stroke="#ffffff" stroke-width="1.1"/>
<rect x="563.15" y="598.40" width="14.40" height="11.60" rx="0.5" fill="#c9302a" stroke="#3a1410" stroke-width="0.6"/>
<rect x="563.15" y="621.90" width="14.40" height="10.90" rx="0.5" fill="#c9302a" stroke="#3a1410" stroke-width="0.6"/>
<path d="M561.5 612.5 H579.5 M561.5 619.5 H579.5 M562.5 619.5 L570.5 612.5 L578.5 619.5" fill="none" stroke="#ffffff" stroke-width="1.0"/>
<rect x="598.50" y="597.50" width="17.00" height="38.00" fill="none" stroke="#ffffff" stroke-width="1.1"/>
<rect x="599.60" y="598.40" width="14.40" height="11.60" rx="0.5" fill="#c9302a" stroke="#3a1410" stroke-width="0.6"/>
<rect x="599.60" y="621.90" width="14.40" height="10.90" rx="0.5" fill="#c9302a" stroke="#3a1410" stroke-width="0.6"/>
<path d="M598.5 612.5 H615.5 M598.5 619.5 H615.5 M599.5 619.5 L607.0 612.5 L614.5 619.5" fill="none" stroke="#ffffff" stroke-width="1.0"/>
<circle cx="442.30" cy="602.70" r="3.3" fill="#d3942f"/>
<circle cx="442.30" cy="602.70" r="1.2" fill="#000"/>
<circle cx="478.90" cy="602.70" r="3.3" fill="#d3942f"/>
<circle cx="478.90" cy="602.70" r="1.2" fill="#000"/>
<circle cx="515.20" cy="602.70" r="3.3" fill="#d3942f"/>
<circle cx="515.20" cy="602.70" r="1.2" fill="#000"/>
<circle cx="551.50" cy="602.70" r="3.3" fill="#d3942f"/>
<circle cx="551.50" cy="602.70" r="1.2" fill="#000"/>
<circle cx="587.90" cy="602.70" r="3.3" fill="#d3942f"/>
<circle cx="587.90" cy="602.70" r="1.2" fill="#000"/>
<circle cx="624.30" cy="602.70" r="3.3" fill="#d3942f"/>
<circle cx="624.30" cy="602.70" r="1.2" fill="#000"/>
<circle cx="506.00" cy="591.20" r="3.0" fill="#d3942f"/>
<circle cx="506.00" cy="591.20" r="1.2" fill="#000"/>
<circle cx="523.70" cy="591.20" r="3.0" fill="#d3942f"/>
<circle cx="523.70" cy="591.20" r="1.2" fill="#000"/>
<circle cx="543.00" cy="591.20" r="3.0" fill="#d3942f"/>
<circle cx="543.00" cy="591.20" r="1.2" fill="#000"/>
<circle cx="560.40" cy="591.20" r="3.0" fill="#d3942f"/>
<circle cx="560.40" cy="591.20" r="1.2" fill="#000"/>
<circle cx="579.50" cy="591.20" r="3.0" fill="#d3942f"/>
<circle cx="579.50" cy="591.20" r="1.2" fill="#000"/>
<rect x="457.60" y="651.00" width="7.40" height="6.80" rx="0.5" fill="#c9302a" stroke="#3a1410" stroke-width="0.6"/>
<rect x="457.60" y="663.30" width="7.40" height="6.40" rx="0.5" fill="#c9302a" stroke="#3a1410" stroke-width="0.6"/>
<rect x="458.00" y="659" width="6.6" height="2" fill="#ffffff"/>
<rect x="475.75" y="651.00" width="7.40" height="6.80" rx="0.5" fill="#c9302a" stroke="#3a1410" stroke-width="0.6"/>
<rect x="475.75" y="663.30" width="7.40" height="6.40" rx="0.5" fill="#c9302a" stroke="#3a1410" stroke-width="0.6"/>
<rect x="476.15" y="659" width="6.6" height="2" fill="#ffffff"/>
<rect x="493.90" y="651.00" width="7.40" height="6.80" rx="0.5" fill="#c9302a" stroke="#3a1410" stroke-width="0.6"/>
<rect x="493.90" y="663.30" width="7.40" height="6.40" rx="0.5" fill="#c9302a" stroke="#3a1410" stroke-width="0.6"/>
<rect x="494.30" y="659" width="6.6" height="2" fill="#ffffff"/>
<rect x="512.05" y="651.00" width="7.40" height="6.80" rx="0.5" fill="#c9302a" stroke="#3a1410" stroke-width="0.6"/>
<rect x="512.05" y="663.30" width="7.40" height="6.40" rx="0.5" fill="#c9302a" stroke="#3a1410" stroke-width="0.6"/>
<rect x="512.45" y="659" width="6.6" height="2" fill="#ffffff"/>
<rect x="530.20" y="651.00" width="7.40" height="6.80" rx="0.5" fill="#c9302a" stroke="#3a1410" stroke-width="0.6"/>
<rect x="530.20" y="663.30" width="7.40" height="6.40" rx="0.5" fill="#c9302a" stroke="#3a1410" stroke-width="0.6"/>
<rect x="530.60" y="659" width="6.6" height="2" fill="#ffffff"/>
<rect x="548.35" y="651.00" width="7.40" height="6.80" rx="0.5" fill="#c9302a" stroke="#3a1410" stroke-width="0.6"/>
<rect x="548.35" y="663.30" width="7.40" height="6.40" rx="0.5" fill="#c9302a" stroke="#3a1410" stroke-width="0.6"/>
<rect x="548.75" y="659" width="6.6" height="2" fill="#ffffff"/>
<rect x="566.50" y="651.00" width="7.40" height="6.80" rx="0.5" fill="#c9302a" stroke="#3a1410" stroke-width="0.6"/>
<rect x="566.50" y="663.30" width="7.40" height="6.40" rx="0.5" fill="#c9302a" stroke="#3a1410" stroke-width="0.6"/>
<rect x="566.90" y="659" width="6.6" height="2" fill="#ffffff"/>
<rect x="584.65" y="651.00" width="7.40" height="6.80" rx="0.5" fill="#c9302a" stroke="#3a1410" stroke-width="0.6"/>
<rect x="584.65" y="663.30" width="7.40" height="6.40" rx="0.5" fill="#c9302a" stroke="#3a1410" stroke-width="0.6"/>
<rect x="585.05" y="659" width="6.6" height="2" fill="#ffffff"/>
<rect x="602.80" y="651.00" width="7.40" height="6.80" rx="0.5" fill="#c9302a" stroke="#3a1410" stroke-width="0.6"/>
<rect x="602.80" y="663.30" width="7.40" height="6.40" rx="0.5" fill="#c9302a" stroke="#3a1410" stroke-width="0.6"/>
<rect x="603.20" y="659" width="6.6" height="2" fill="#ffffff"/>
<rect x="620.95" y="651.00" width="7.40" height="6.80" rx="0.5" fill="#c9302a" stroke="#3a1410" stroke-width="0.6"/>
<rect x="620.95" y="663.30" width="7.40" height="6.40" rx="0.5" fill="#c9302a" stroke="#3a1410" stroke-width="0.6"/>
<rect x="621.35" y="659" width="6.6" height="2" fill="#ffffff"/>
<path d="M452 676.5 H633.6 V721.8 H452 Z" fill="none" stroke="#ffffff" stroke-width="1.3"/>
<path d="M627.6 721.8 L633.6 714.2" fill="none" stroke="#ffffff" stroke-width="1.1"/>
<path d="M461 676.5 V688.5 H498 V676.5 M461 683.6 H498" fill="none" stroke="#ffffff" stroke-width="1.2"/>
<path d="M588.3 676.5 V688.5 H624.3 V676.5 M588.3 683.6 H624.3" fill="none" stroke="#ffffff" stroke-width="1.2"/>
<ellipse cx="461.00" cy="698.00" rx="6.5" ry="7.7" fill="#2a0e08"/>
<ellipse cx="461.00" cy="698.00" rx="5.6" ry="6.8" fill="#d24a36"/>
<ellipse cx="461.00" cy="698.00" rx="4.7" ry="5.3" fill="#000"/>
<ellipse cx="479.15" cy="698.00" rx="6.5" ry="7.7" fill="#2a0e08"/>
<ellipse cx="479.15" cy="698.00" rx="5.6" ry="6.8" fill="#d24a36"/>
<ellipse cx="479.15" cy="698.00" rx="4.7" ry="5.3" fill="#000"/>
<ellipse cx="497.30" cy="698.00" rx="6.5" ry="7.7" fill="#2a0e08"/>
<ellipse cx="497.30" cy="698.00" rx="5.6" ry="6.8" fill="#d24a36"/>
<ellipse cx="497.30" cy="698.00" rx="4.7" ry="5.3" fill="#000"/>
<ellipse cx="515.45" cy="698.00" rx="6.5" ry="7.7" fill="#2a0e08"/>
<ellipse cx="515.45" cy="698.00" rx="5.6" ry="6.8" fill="#d24a36"/>
<ellipse cx="515.45" cy="698.00" rx="4.7" ry="5.3" fill="#000"/>
<ellipse cx="533.60" cy="698.00" rx="6.5" ry="7.7" fill="#2a0e08"/>
<ellipse cx="533.60" cy="698.00" rx="5.6" ry="6.8" fill="#d24a36"/>
<ellipse cx="533.60" cy="698.00" rx="4.7" ry="5.3" fill="#000"/>
<ellipse cx="551.75" cy="698.00" rx="6.5" ry="7.7" fill="#2a0e08"/>
<ellipse cx="551.75" cy="698.00" rx="5.6" ry="6.8" fill="#d24a36"/>
<ellipse cx="551.75" cy="698.00" rx="4.7" ry="5.3" fill="#000"/>
<ellipse cx="569.90" cy="698.00" rx="6.5" ry="7.7" fill="#2a0e08"/>
<ellipse cx="569.90" cy="698.00" rx="5.6" ry="6.8" fill="#d24a36"/>
<ellipse cx="569.90" cy="698.00" rx="4.7" ry="5.3" fill="#000"/>
<ellipse cx="588.05" cy="698.00" rx="6.5" ry="7.7" fill="#2a0e08"/>
<ellipse cx="588.05" cy="698.00" rx="5.6" ry="6.8" fill="#d24a36"/>
<ellipse cx="588.05" cy="698.00" rx="4.7" ry="5.3" fill="#000"/>
<ellipse cx="606.20" cy="698.00" rx="6.5" ry="7.7" fill="#2a0e08"/>
<ellipse cx="606.20" cy="698.00" rx="5.6" ry="6.8" fill="#d24a36"/>
<ellipse cx="606.20" cy="698.00" rx="4.7" ry="5.3" fill="#000"/>
<ellipse cx="624.35" cy="698.00" rx="6.5" ry="7.7" fill="#2a0e08"/>
<ellipse cx="624.35" cy="698.00" rx="5.6" ry="6.8" fill="#d24a36"/>
<ellipse cx="624.35" cy="698.00" rx="4.7" ry="5.3" fill="#000"/>
<g fill="none" stroke="#ffffff" stroke-width="1.8" stroke-linecap="square" stroke-linejoin="miter"><path transform="translate(546.70 136.90) scale(1.8868 1.8667)" d="M0 0 H3 Q4 0 4 1 V1.9 Q4 2.9 3 2.9 H0 M3 2.9 Q4 2.9 4 3.9 V5 Q4 6 3 6 H0 V0" vector-effect="non-scaling-stroke"/><path transform="translate(556.15 136.90) scale(1.8868 1.8667)" d="M0 6 V2 L2 0 L4 2 V6 M0 3.6 H4" vector-effect="non-scaling-stroke"/><path transform="translate(565.60 136.90) scale(1.8868 1.8667)" d="M0 0 H4 M2 0 V6" vector-effect="non-scaling-stroke"/><path transform="translate(575.05 136.90) scale(1.8868 1.8667)" d="M0 0.9 L1.6 0 V6 H4" vector-effect="non-scaling-stroke"/></g>
<g fill="none" stroke="#ffffff" stroke-width="1.0" stroke-linecap="square" stroke-linejoin="miter"><path transform="translate(418.20 126.00) scale(0.9189 0.9167)" d="M3.2 0 H0.8 Q0 0 0 0.8 V5.2 Q0 6 0.8 6 H3.2" vector-effect="non-scaling-stroke"/><path transform="translate(422.32 126.00) scale(0.9189 0.9167)" d="M4 0 H0.3 L0 2.6 H3 Q4 2.6 4 3.6 V5 Q4 6 3 6 H0" vector-effect="non-scaling-stroke"/></g>
<g fill="none" stroke="#ffffff" stroke-width="1.0" stroke-linecap="square" stroke-linejoin="miter"><path transform="translate(401.10 169.50) scale(1.6055 1.0667)" d="M0 6 V0 L4 6 V0" vector-effect="non-scaling-stroke"/><path transform="translate(408.61 169.50) scale(1.6055 1.0667)" d="M0.2 0 H1.6 V6 H0" vector-effect="non-scaling-stroke"/></g>
<g fill="none" stroke="#ffffff" stroke-width="1.0" stroke-linecap="square" stroke-linejoin="miter"><path transform="translate(422.20 245.50) scale(1.0250 0.9500)" d="M0 6 V0 H3 Q4 0 4 1 V1.9 Q4 2.9 3 2.9 H0 M2 2.9 L4 6" vector-effect="non-scaling-stroke"/><path transform="translate(427.30 245.50) scale(1.0250 0.9500)" d="M3 6 V0 L0 4.2 H4" vector-effect="non-scaling-stroke"/><path transform="translate(432.40 245.50) scale(1.0250 0.9500)" d="M1 0 H3 Q4 0 4 1 V5 Q4 6 3 6 H1 Q0 6 0 5 V1 Q0 0 1 0 Z M3.6 0.8 L0.4 5.2" vector-effect="non-scaling-stroke"/></g>
<g fill="none" stroke="#ffffff" stroke-width="1.0" stroke-linecap="square" stroke-linejoin="miter"><path transform="translate(449.20 245.50) scale(1.1531 0.9500)" d="M0 6 V0 H3 Q4 0 4 1 V1.9 Q4 2.9 3 2.9 H0 M2 2.9 L4 6" vector-effect="non-scaling-stroke"/><path transform="translate(454.81 245.50) scale(1.1531 0.9500)" d="M3 6 V0 L0 4.2 H4" vector-effect="non-scaling-stroke"/><path transform="translate(460.42 245.50) scale(1.1531 0.9500)" d="M0.2 0 H1.6 V6 H0" vector-effect="non-scaling-stroke"/></g>
<g fill="none" stroke="#ffffff" stroke-width="1.0" stroke-linecap="square" stroke-linejoin="miter"><path transform="translate(446.90 302.70) scale(1.0750 0.9167)" d="M0 6 V0 L4 6 V0" vector-effect="non-scaling-stroke"/><path transform="translate(452.20 302.70) scale(1.0750 0.9167)" d="M0 1 Q0 0 1 0 H3 Q4 0 4 1 V2 Q4 2.8 3.2 3.3 L0 6 H4" vector-effect="non-scaling-stroke"/></g>
<g fill="none" stroke="#ffffff" stroke-width="1.0" stroke-linecap="square" stroke-linejoin="miter"><path transform="translate(551.00 301.80) scale(1.5986 1.4000)" d="M0 0 H1.8 Q4 0 4 2.2 V3.8 Q4 6 1.8 6 H0 Z" vector-effect="non-scaling-stroke"/><path transform="translate(558.82 301.80) scale(1.5986 1.4000)" d="M0.2 0 H1.6 V6 H0" vector-effect="non-scaling-stroke"/></g>
<g fill="none" stroke="#ffffff" stroke-width="1.0" stroke-linecap="square" stroke-linejoin="miter"><path transform="translate(434.20 355.30) scale(1.3587 0.8667)" d="M3.2 0 H0.8 Q0 0 0 0.8 V5.2 Q0 6 0.8 6 H3.2" vector-effect="non-scaling-stroke"/><path transform="translate(439.82 355.30) scale(1.3587 0.8667)" d="M0.2 0 H1.6 V6 H0" vector-effect="non-scaling-stroke"/><path transform="translate(443.27 355.30) scale(1.3587 0.8667)" d="M0 0 H4 L1.8 2.6 H3 Q4 2.6 4 3.6 V5 Q4 6 3 6 H1 Q0 6 0 5" vector-effect="non-scaling-stroke"/></g>
<g fill="none" stroke="#ffffff" stroke-width="1.0" stroke-linecap="square" stroke-linejoin="miter"><path transform="translate(455.50 355.30) scale(1.3370 0.8667)" d="M3.2 0 H0.8 Q0 0 0 0.8 V5.2 Q0 6 0.8 6 H3.2" vector-effect="non-scaling-stroke"/><path transform="translate(461.05 355.30) scale(1.3370 0.8667)" d="M0.2 0 H1.6 V6 H0" vector-effect="non-scaling-stroke"/><path transform="translate(464.45 355.30) scale(1.3370 0.8667)" d="M0 1 Q0 0 1 0 H3 Q4 0 4 1 V2 Q4 2.8 3.2 3.3 L0 6 H4" vector-effect="non-scaling-stroke"/></g>
<g fill="none" stroke="#ffffff" stroke-width="1.0" stroke-linecap="square" stroke-linejoin="miter"><path transform="translate(478.50 355.30) scale(1.0000 0.8667)" d="M0 6 V0 H3 Q4 0 4 1 V1.9 Q4 2.9 3 2.9 H0 M2 2.9 L4 6" vector-effect="non-scaling-stroke"/><path transform="translate(483.50 355.30) scale(1.0000 0.8667)" d="M0 0 H4 L1.8 2.6 H3 Q4 2.6 4 3.6 V5 Q4 6 3 6 H1 Q0 6 0 5" vector-effect="non-scaling-stroke"/></g>
<g fill="none" stroke="#ffffff" stroke-width="1.0" stroke-linecap="square" stroke-linejoin="miter"><path transform="translate(497.40 355.30) scale(0.9625 0.8667)" d="M0 6 V0 H3 Q4 0 4 1 V1.9 Q4 2.9 3 2.9 H0 M2 2.9 L4 6" vector-effect="non-scaling-stroke"/><path transform="translate(502.25 355.30) scale(0.9625 0.8667)" d="M0 1 Q0 0 1 0 H3 Q4 0 4 1 V2 Q4 2.8 3.2 3.3 L0 6 H4" vector-effect="non-scaling-stroke"/></g>
<g fill="none" stroke="#ffffff" stroke-width="1.0" stroke-linecap="square" stroke-linejoin="miter"><path transform="translate(597.50 343.90) scale(1.2885 0.9000)" d="M3.2 0 H0.8 Q0 0 0 0.8 V5.2 Q0 6 0.8 6 H3.2" vector-effect="non-scaling-stroke"/><path transform="translate(602.88 343.90) scale(1.2885 0.9000)" d="M0.2 0 H1.6 V6 H0" vector-effect="non-scaling-stroke"/></g>
<g fill="none" stroke="#ffffff" stroke-width="1.0" stroke-linecap="square" stroke-linejoin="miter"><path transform="translate(570.00 410.50) scale(1.1028 1.1167)" d="M3.2 0 H0.8 Q0 0 0 0.8 V5.2 Q0 6 0.8 6 H3.2" vector-effect="non-scaling-stroke"/><path transform="translate(574.89 410.50) scale(1.1028 1.1167)" d="M0 1 Q0 0 1 0 H3 Q4 0 4 1 V2 Q4 2.8 3.2 3.3 L0 6 H4" vector-effect="non-scaling-stroke"/></g>
<g fill="none" stroke="#ffffff" stroke-width="1.0" stroke-linecap="square" stroke-linejoin="miter"><path transform="translate(478.00 484.90) scale(1.5795 1.1167)" d="M1 0 H3 Q4 0 4 1 V5 Q4 6 3 6 H1 Q0 6 0 5 V1 Q0 0 1 0 Z M2.6 4.4 L4 6" vector-effect="non-scaling-stroke"/><path transform="translate(485.46 484.90) scale(1.5795 1.1167)" d="M0.2 0 H1.6 V6 H0" vector-effect="non-scaling-stroke"/></g>
<g fill="none" stroke="#ffffff" stroke-width="1.0" stroke-linecap="square" stroke-linejoin="miter"><path transform="translate(520.50 490.90) scale(0.9500 0.8333)" d="M0 0 H1.8 Q4 0 4 2.2 V3.8 Q4 6 1.8 6 H0 Z" vector-effect="non-scaling-stroke"/><path transform="translate(525.30 490.90) scale(0.9500 0.8333)" d="M0 1 Q0 0 1 0 H3 Q4 0 4 1 V2 Q4 2.8 3.2 3.3 L0 6 H4" vector-effect="non-scaling-stroke"/></g>
<g fill="none" stroke="#ffffff" stroke-width="1.0" stroke-linecap="square" stroke-linejoin="miter"><path transform="translate(556.50 490.90) scale(0.9500 0.8333)" d="M0 0 H1.8 Q4 0 4 2.2 V3.8 Q4 6 1.8 6 H0 Z" vector-effect="non-scaling-stroke"/><path transform="translate(561.30 490.90) scale(0.9500 0.8333)" d="M0 0 H4 L1.8 2.6 H3 Q4 2.6 4 3.6 V5 Q4 6 3 6 H1 Q0 6 0 5" vector-effect="non-scaling-stroke"/></g>
<g fill="none" stroke="#ffffff" stroke-width="1.0" stroke-linecap="square" stroke-linejoin="miter"><path transform="translate(478.50 548.70) scale(1.4662 1.4667)" d="M0 0 L4 6 M4 0 L0 6" vector-effect="non-scaling-stroke"/><path transform="translate(485.86 548.70) scale(1.4662 1.4667)" d="M0.2 0 H1.6 V6 H0" vector-effect="non-scaling-stroke"/></g>
<g fill="none" stroke="#ffffff" stroke-width="1.0" stroke-linecap="square" stroke-linejoin="miter"><path transform="translate(620.90 515.10) scale(0.8875 0.8000)" d="M0 0 H1.8 Q4 0 4 2.2 V3.8 Q4 6 1.8 6 H0 Z" vector-effect="non-scaling-stroke"/><path transform="translate(625.45 515.10) scale(0.8875 0.8000)" d="M0 0 H4 L1.4 6" vector-effect="non-scaling-stroke"/></g>
<g fill="none" stroke="#ffffff" stroke-width="1.0" stroke-linecap="square" stroke-linejoin="miter"><path transform="translate(663.10 509.10) scale(0.9750 1.1500)" d="M0 6 V2 L2 0 L4 2 V6 M0 3.6 H4" vector-effect="non-scaling-stroke"/></g>
<g fill="none" stroke="#ffffff" stroke-width="1.0" stroke-linecap="square" stroke-linejoin="miter"><path transform="translate(670.90 509.10) scale(0.9034 1.1500)" d="M0 0 H1.8 Q4 0 4 2.2 V3.8 Q4 6 1.8 6 H0 Z" vector-effect="non-scaling-stroke"/><path transform="translate(675.69 509.10) scale(0.9034 1.1500)" d="M4 0 H0.3 L0 2.6 H3 Q4 2.6 4 3.6 V5 Q4 6 3 6 H0" vector-effect="non-scaling-stroke"/></g>
<g fill="none" stroke="#ffffff" stroke-width="1.0" stroke-linecap="square" stroke-linejoin="miter"><path transform="translate(663.10 528.40) scale(0.9750 1.1500)" d="M0 6 V2 L2 0 L4 2 V6 M0 3.6 H4" vector-effect="non-scaling-stroke"/></g>
<g fill="none" stroke="#ffffff" stroke-width="1.0" stroke-linecap="square" stroke-linejoin="miter"><path transform="translate(670.90 528.40) scale(0.9034 1.1500)" d="M0 0 H1.8 Q4 0 4 2.2 V3.8 Q4 6 1.8 6 H0 Z" vector-effect="non-scaling-stroke"/><path transform="translate(675.69 528.40) scale(0.9034 1.1500)" d="M3 6 V0 L0 4.2 H4" vector-effect="non-scaling-stroke"/></g>
<g fill="none" stroke="#ffffff" stroke-width="1.0" stroke-linecap="square" stroke-linejoin="miter"><path transform="translate(663.10 547.90) scale(0.9750 1.1500)" d="M0 6 V2 L2 0 L4 2 V6 M0 3.6 H4" vector-effect="non-scaling-stroke"/></g>
<g fill="none" stroke="#ffffff" stroke-width="1.0" stroke-linecap="square" stroke-linejoin="miter"><path transform="translate(670.90 547.90) scale(0.9034 1.1500)" d="M0 0 H1.8 Q4 0 4 2.2 V3.8 Q4 6 1.8 6 H0 Z" vector-effect="non-scaling-stroke"/><path transform="translate(675.69 547.90) scale(0.9034 1.1500)" d="M3.4 0 L0.6 3.2 Q0 3.9 0 4.6 V5 Q0 6 1 6 H3 Q4 6 4 5 V4.2 Q4 3.2 3 3.2 H0.6" vector-effect="non-scaling-stroke"/></g>
<g fill="none" stroke="#ffffff" stroke-width="1.0" stroke-linecap="square" stroke-linejoin="miter"><path transform="translate(456.25 589.20) scale(1.0625 0.6833)" d="M0 0 H1.8 Q4 0 4 2.2 V3.8 Q4 6 1.8 6 H0 Z" vector-effect="non-scaling-stroke"/><path transform="translate(461.50 589.20) scale(1.0625 0.6833)" d="M1 0 H3 Q4 0 4 1 V1.9 Q4 2.9 3 2.9 H1 Q0 2.9 0 3.9 V5 Q0 6 1 6 H3 Q4 6 4 5 V3.9 Q4 2.9 3 2.9 M1 2.9 Q0 2.9 0 1.9 V1 Q0 0 1 0" vector-effect="non-scaling-stroke"/></g>
<g fill="none" stroke="#ffffff" stroke-width="1.0" stroke-linecap="square" stroke-linejoin="miter"><path transform="translate(492.70 589.20) scale(1.0625 0.6833)" d="M0 0 H1.8 Q4 0 4 2.2 V3.8 Q4 6 1.8 6 H0 Z" vector-effect="non-scaling-stroke"/><path transform="translate(497.95 589.20) scale(1.0625 0.6833)" d="M0.6 6 L3.4 2.8 Q4 2.1 4 1.4 V1 Q4 0 3 0 H1 Q0 0 0 1 V1.8 Q0 2.8 1 2.8 H3.4" vector-effect="non-scaling-stroke"/></g>
<g fill="none" stroke="#ffffff" stroke-width="1.0" stroke-linecap="square" stroke-linejoin="miter"><path transform="translate(526.90 589.20) scale(1.2245 0.6833)" d="M0 0 H1.8 Q4 0 4 2.2 V3.8 Q4 6 1.8 6 H0 Z" vector-effect="non-scaling-stroke"/><path transform="translate(532.80 589.20) scale(1.2245 0.6833)" d="M0.2 0 H1.6 V6 H0" vector-effect="non-scaling-stroke"/><path transform="translate(536.00 589.20) scale(1.2245 0.6833)" d="M1 0 H3 Q4 0 4 1 V5 Q4 6 3 6 H1 Q0 6 0 5 V1 Q0 0 1 0 Z M3.6 0.8 L0.4 5.2" vector-effect="non-scaling-stroke"/></g>
<g fill="none" stroke="#ffffff" stroke-width="1.0" stroke-linecap="square" stroke-linejoin="miter"><path transform="translate(563.35 589.20) scale(1.5789 0.6833)" d="M0 0 H1.8 Q4 0 4 2.2 V3.8 Q4 6 1.8 6 H0 Z" vector-effect="non-scaling-stroke"/><path transform="translate(570.67 589.20) scale(1.5789 0.6833)" d="M0.2 0 H1.6 V6 H0" vector-effect="non-scaling-stroke"/><path transform="translate(574.51 589.20) scale(1.5789 0.6833)" d="M0.2 0 H1.6 V6 H0" vector-effect="non-scaling-stroke"/></g>
<g fill="none" stroke="#ffffff" stroke-width="1.0" stroke-linecap="square" stroke-linejoin="miter"><path transform="translate(599.80 589.20) scale(1.2245 0.6833)" d="M0 0 H1.8 Q4 0 4 2.2 V3.8 Q4 6 1.8 6 H0 Z" vector-effect="non-scaling-stroke"/><path transform="translate(605.70 589.20) scale(1.2245 0.6833)" d="M0.2 0 H1.6 V6 H0" vector-effect="non-scaling-stroke"/><path transform="translate(608.90 589.20) scale(1.2245 0.6833)" d="M0 1 Q0 0 1 0 H3 Q4 0 4 1 V2 Q4 2.8 3.2 3.3 L0 6 H4" vector-effect="non-scaling-stroke"/></g>
<g fill="none" stroke="#ffffff" stroke-width="1.0" stroke-linecap="square" stroke-linejoin="miter"><path transform="translate(456.80 639.80) scale(1.3729 1.0167)" d="M0 6 V0 H3 Q4 0 4 1 V1.9 Q4 2.9 3 2.9 H0 M2 2.9 L4 6" vector-effect="non-scaling-stroke"/><path transform="translate(463.33 639.80) scale(1.3729 1.0167)" d="M0.2 0 H1.6 V6 H0" vector-effect="non-scaling-stroke"/></g>
<g fill="none" stroke="#ffffff" stroke-width="1.0" stroke-linecap="square" stroke-linejoin="miter"><path transform="translate(472.20 639.80) scale(1.3507 1.0167)" d="M3.2 0 H0.8 Q0 0 0 0.8 V5.2 Q0 6 0.8 6 H3.2" vector-effect="non-scaling-stroke"/><path transform="translate(477.83 639.80) scale(1.3507 1.0167)" d="M0.2 0 H1.6 V6 H0" vector-effect="non-scaling-stroke"/><path transform="translate(481.30 639.80) scale(1.3507 1.0167)" d="M1 0 H3 Q4 0 4 1 V5 Q4 6 3 6 H1 Q0 6 0 5 V1 Q0 0 1 0 Z M3.6 0.8 L0.4 5.2" vector-effect="non-scaling-stroke"/></g>
<g fill="none" stroke="#ffffff" stroke-width="1.0" stroke-linecap="square" stroke-linejoin="miter"><path transform="translate(493.10 639.80) scale(0.9954 1.0167)" d="M0 6 V0 H3 Q4 0 4 1 V1.9 Q4 2.9 3 2.9 H0 M2 2.9 L4 6" vector-effect="non-scaling-stroke"/><path transform="translate(498.12 639.80) scale(0.9954 1.0167)" d="M3 6 V0 L0 4.2 H4" vector-effect="non-scaling-stroke"/></g>
<g fill="none" stroke="#ffffff" stroke-width="1.0" stroke-linecap="square" stroke-linejoin="miter"><path transform="translate(508.50 639.80) scale(1.7751 1.0167)" d="M3.2 0 H0.8 Q0 0 0 0.8 V5.2 Q0 6 0.8 6 H3.2" vector-effect="non-scaling-stroke"/><path transform="translate(515.57 639.80) scale(1.7751 1.0167)" d="M0.2 0 H1.6 V6 H0" vector-effect="non-scaling-stroke"/><path transform="translate(519.80 639.80) scale(1.7751 1.0167)" d="M0.2 0 H1.6 V6 H0" vector-effect="non-scaling-stroke"/></g>
<g fill="none" stroke="#ffffff" stroke-width="1.0" stroke-linecap="square" stroke-linejoin="miter"><path transform="translate(529.40 639.80) scale(0.9954 1.0167)" d="M0 6 V0 H3 Q4 0 4 1 V1.9 Q4 2.9 3 2.9 H0 M2 2.9 L4 6" vector-effect="non-scaling-stroke"/><path transform="translate(534.42 639.80) scale(0.9954 1.0167)" d="M4 0 H0.3 L0 2.6 H3 Q4 2.6 4 3.6 V5 Q4 6 3 6 H0" vector-effect="non-scaling-stroke"/></g>
<g fill="none" stroke="#ffffff" stroke-width="1.0" stroke-linecap="square" stroke-linejoin="miter"><path transform="translate(544.80 639.80) scale(1.3507 1.0167)" d="M3.2 0 H0.8 Q0 0 0 0.8 V5.2 Q0 6 0.8 6 H3.2" vector-effect="non-scaling-stroke"/><path transform="translate(550.43 639.80) scale(1.3507 1.0167)" d="M0.2 0 H1.6 V6 H0" vector-effect="non-scaling-stroke"/><path transform="translate(553.90 639.80) scale(1.3507 1.0167)" d="M3 6 V0 L0 4.2 H4" vector-effect="non-scaling-stroke"/></g>
<g fill="none" stroke="#ffffff" stroke-width="1.0" stroke-linecap="square" stroke-linejoin="miter"><path transform="translate(565.70 639.80) scale(0.9954 1.0167)" d="M0 6 V0 H3 Q4 0 4 1 V1.9 Q4 2.9 3 2.9 H0 M2 2.9 L4 6" vector-effect="non-scaling-stroke"/><path transform="translate(570.72 639.80) scale(0.9954 1.0167)" d="M3.4 0 L0.6 3.2 Q0 3.9 0 4.6 V5 Q0 6 1 6 H3 Q4 6 4 5 V4.2 Q4 3.2 3 3.2 H0.6" vector-effect="non-scaling-stroke"/></g>
<g fill="none" stroke="#ffffff" stroke-width="1.0" stroke-linecap="square" stroke-linejoin="miter"><path transform="translate(581.10 639.80) scale(1.3507 1.0167)" d="M3.2 0 H0.8 Q0 0 0 0.8 V5.2 Q0 6 0.8 6 H3.2" vector-effect="non-scaling-stroke"/><path transform="translate(586.73 639.80) scale(1.3507 1.0167)" d="M0.2 0 H1.6 V6 H0" vector-effect="non-scaling-stroke"/><path transform="translate(590.20 639.80) scale(1.3507 1.0167)" d="M4 0 H0.3 L0 2.6 H3 Q4 2.6 4 3.6 V5 Q4 6 3 6 H0" vector-effect="non-scaling-stroke"/></g>
<g fill="none" stroke="#ffffff" stroke-width="1.0" stroke-linecap="square" stroke-linejoin="miter"><path transform="translate(602.00 639.80) scale(0.9954 1.0167)" d="M0 6 V0 H3 Q4 0 4 1 V1.9 Q4 2.9 3 2.9 H0 M2 2.9 L4 6" vector-effect="non-scaling-stroke"/><path transform="translate(607.02 639.80) scale(0.9954 1.0167)" d="M0 0 H4 L1.4 6" vector-effect="non-scaling-stroke"/></g>
<g fill="none" stroke="#ffffff" stroke-width="1.0" stroke-linecap="square" stroke-linejoin="miter"><path transform="translate(617.40 639.80) scale(1.3507 1.0167)" d="M3.2 0 H0.8 Q0 0 0 0.8 V5.2 Q0 6 0.8 6 H3.2" vector-effect="non-scaling-stroke"/><path transform="translate(623.03 639.80) scale(1.3507 1.0167)" d="M0.2 0 H1.6 V6 H0" vector-effect="non-scaling-stroke"/><path transform="translate(626.50 639.80) scale(1.3507 1.0167)" d="M3.4 0 L0.6 3.2 Q0 3.9 0 4.6 V5 Q0 6 1 6 H3 Q4 6 4 5 V4.2 Q4 3.2 3 3.2 H0.6" vector-effect="non-scaling-stroke"/></g>
<g fill="none" stroke="#ffffff" stroke-width="1.0" stroke-linecap="square" stroke-linejoin="miter"><path transform="translate(641.50 695.20) scale(1.2696 1.3167)" d="M0 0 L4 6 M4 0 L0 6" vector-effect="non-scaling-stroke"/><path transform="translate(647.92 695.20) scale(1.2696 1.3167)" d="M0 1 Q0 0 1 0 H3 Q4 0 4 1 V2 Q4 2.8 3.2 3.3 L0 6 H4" vector-effect="non-scaling-stroke"/></g>
<g fill="none" stroke="#ffffff" stroke-width="1.9" stroke-linecap="square" stroke-linejoin="miter"><path transform="translate(454.15 724.25) scale(0.7750 1.7833)" d="M0 0.9 L1.6 0 V6 H4" vector-effect="non-scaling-stroke"/></g>
<g fill="none" stroke="#ffffff" stroke-width="1.9" stroke-linecap="square" stroke-linejoin="miter"><path transform="translate(463.15 724.25) scale(1.9750 1.7833)" d="M1 0 H3 Q4 0 4 1 V5 Q4 6 3 6 H1 Q0 6 0 5 V1 Q0 0 1 0 Z M3.6 0.8 L0.4 5.2" vector-effect="non-scaling-stroke"/></g>
<g fill="none" stroke="#ffffff" stroke-width="1.9" stroke-linecap="square" stroke-linejoin="miter"><path transform="translate(475.15 724.25) scale(2.0250 1.7833)" d="M0.6 6 L3.4 2.8 Q4 2.1 4 1.4 V1 Q4 0 3 0 H1 Q0 0 0 1 V1.8 Q0 2.8 1 2.8 H3.4" vector-effect="non-scaling-stroke"/></g>
<g fill="none" stroke="#ffffff" stroke-width="1.9" stroke-linecap="square" stroke-linejoin="miter"><path transform="translate(493.35 724.25) scale(1.9250 1.7833)" d="M1 0 H3 Q4 0 4 1 V1.9 Q4 2.9 3 2.9 H1 Q0 2.9 0 3.9 V5 Q0 6 1 6 H3 Q4 6 4 5 V3.9 Q4 2.9 3 2.9 M1 2.9 Q0 2.9 0 1.9 V1 Q0 0 1 0" vector-effect="non-scaling-stroke"/></g>
<g fill="none" stroke="#ffffff" stroke-width="1.9" stroke-linecap="square" stroke-linejoin="miter"><path transform="translate(511.75 724.25) scale(1.9250 1.7833)" d="M0 0 H4 L1.4 6" vector-effect="non-scaling-stroke"/></g>
<g fill="none" stroke="#ffffff" stroke-width="1.9" stroke-linecap="square" stroke-linejoin="miter"><path transform="translate(530.05 724.25) scale(1.9250 1.7833)" d="M3.4 0 L0.6 3.2 Q0 3.9 0 4.6 V5 Q0 6 1 6 H3 Q4 6 4 5 V4.2 Q4 3.2 3 3.2 H0.6" vector-effect="non-scaling-stroke"/></g>
<g fill="none" stroke="#ffffff" stroke-width="1.9" stroke-linecap="square" stroke-linejoin="miter"><path transform="translate(548.75 724.25) scale(1.5750 1.7833)" d="M4 0 H0.3 L0 2.6 H3 Q4 2.6 4 3.6 V5 Q4 6 3 6 H0" vector-effect="non-scaling-stroke"/></g>
<g fill="none" stroke="#ffffff" stroke-width="1.9" stroke-linecap="square" stroke-linejoin="miter"><path transform="translate(565.75 724.25) scale(1.9250 1.7833)" d="M3 6 V0 L0 4.2 H4" vector-effect="non-scaling-stroke"/></g>
<g fill="none" stroke="#ffffff" stroke-width="1.9" stroke-linecap="square" stroke-linejoin="miter"><path transform="translate(584.95 724.25) scale(1.8250 1.7833)" d="M0 0 H4 L1.8 2.6 H3 Q4 2.6 4 3.6 V5 Q4 6 3 6 H1 Q0 6 0 5" vector-effect="non-scaling-stroke"/></g>
<g fill="none" stroke="#ffffff" stroke-width="1.9" stroke-linecap="square" stroke-linejoin="miter"><path transform="translate(602.95 724.25) scale(1.8750 1.7833)" d="M0 1 Q0 0 1 0 H3 Q4 0 4 1 V2 Q4 2.8 3.2 3.3 L0 6 H4" vector-effect="non-scaling-stroke"/></g>
<g fill="none" stroke="#ffffff" stroke-width="1.9" stroke-linecap="square" stroke-linejoin="miter"><path transform="translate(623.45 724.25) scale(0.6500 1.7833)" d="M0 0.9 L1.6 0 V6 H4" vector-effect="non-scaling-stroke"/></g>
<g transform="translate(414.8 482) rotate(-90)"><g fill="none" stroke="#d3942f" stroke-width="1.1" stroke-linecap="square" stroke-linejoin="miter"><path transform="translate(0.50 0.50) scale(1.9965 1.4833)" d="M0 6 V0 H3 Q4 0 4 1 V1.9 Q4 2.9 3 2.9 H0 M2 2.9 L4 6" vector-effect="non-scaling-stroke"/><path transform="translate(11.29 0.50) scale(1.9965 1.4833)" d="M0 4.2 H4 V3.5 Q4 2.4 3 2.4 H1 Q0 2.4 0 3.5 V5 Q0 6 1 6 H4" vector-effect="non-scaling-stroke"/><path transform="translate(22.07 0.50) scale(1.9965 1.4833)" d="M0 2.4 L2 6 L4 2.4" vector-effect="non-scaling-stroke"/><path transform="translate(32.86 0.50) scale(1.9965 1.4833)" d="M1.8 5.6 H2.2 V6 H1.8 Z" vector-effect="non-scaling-stroke"/><path transform="translate(40.05 0.50) scale(1.9965 1.4833)" d="M0.8 0 H3.2 M2 0 V6 M0.8 6 H3.2" vector-effect="non-scaling-stroke"/><path transform="translate(50.84 0.50) scale(1.9965 1.4833)" d="M1.8 5.6 H2.2 V6 H1.8 Z" vector-effect="non-scaling-stroke"/><path transform="translate(58.03 0.50) scale(1.9965 1.4833)" d="M1 0 H3 Q4 0 4 1 V5 Q4 6 3 6 H1 Q0 6 0 5 V1 Q0 0 1 0 Z M3.6 0.8 L0.4 5.2" vector-effect="non-scaling-stroke"/><path transform="translate(68.81 0.50) scale(1.9965 1.4833)" d="M1 0 H3 Q4 0 4 1 V5 Q4 6 3 6 H1 Q0 6 0 5 V1 Q0 0 1 0 Z M3.6 0.8 L0.4 5.2" vector-effect="non-scaling-stroke"/></g></g>
<g transform="translate(401.9 451.6) rotate(-90)"><g fill="none" stroke="#d3942f" stroke-width="1.1" stroke-linecap="square" stroke-linejoin="miter"><path transform="translate(0.50 0.50) scale(1.8250 1.4833)" d="M0 0 H4 L1.8 2.6 H3 Q4 2.6 4 3.6 V5 Q4 6 3 6 H1 Q0 6 0 5" vector-effect="non-scaling-stroke"/><path transform="translate(9.80 0.50) scale(1.8250 1.4833)" d="M0 0 H1.8 Q4 0 4 2.2 V3.8 Q4 6 1.8 6 H0 Z" vector-effect="non-scaling-stroke"/></g></g>
</svg>

<!-- status bar -->
<div class="a" style="left:264px;top:746px;width:565px;height:21px;background:#eaeff8;border-top:1px solid #fafbfd;border-left:1px solid #fafbfd;border-bottom:1px solid #b9bcc2;border-right:1px solid #a9acb2"></div>
<div class="a" style="left:424px;top:747px;width:1px;height:19px;background:#c9ced6"></div>
<div class="a" style="left:465px;top:747px;width:1px;height:19px;background:#c9ced6"></div>
<div class="a" style="left:626px;top:747px;width:1px;height:19px;background:#c9ced6"></div>
<div class="a" style="left:787px;top:747px;width:1px;height:19px;background:#c9ced6"></div>

<!-- right panel -->
<div class="a" style="left:829px;top:31px;width:155px;height:736px;background:#e9eff8"></div>
<div class="a" style="left:832px;top:31px;width:152px;height:25px;background:#e9eff8;border-top:1px solid #fbfcfd"></div>
<div class="a" style="left:955px;top:52px;width:27px;height:1px;background:#d5d9df"></div><div class="a" style="left:832px;top:53px;width:150px;height:2px;background:#f7f9fc"></div>
<div class="a" style="left:832px;top:32px;width:59px;height:24px;background:#f6f7f9;border:1px solid #dadde2;border-bottom:none"></div>
<div class="a" style="left:891px;top:34px;width:64px;height:19px;background:#efeff0;border:1px solid #dadde2;border-bottom:none;border-left:none"></div>
<div class="a" style="left:832px;top:55px;width:151px;height:631px;background:#f3f5f8"></div>
<div class="a" style="left:833px;top:55px;width:149px;height:630px;background:#eaf0f9;border:1px solid #8c9096;border-right-color:#9a9ea4"></div>
<div class="cb" style="left:837px;top:58px"></div>
<div class="cb" style="left:837px;top:71px"></div>
<svg class="a" style="left:837px;top:71px" width="11" height="11" viewBox="0 0 11 11"><path d="M1.6 5.4L4.4 8.3L9.6 2.4" fill="none" stroke="#3a3a3a" stroke-width="1.05"/></svg>
<div class="cb" style="left:837px;top:84px"></div>
<svg class="a" style="left:837px;top:84px" width="11" height="11" viewBox="0 0 11 11"><path d="M1.6 5.4L4.4 8.3L9.6 2.4" fill="none" stroke="#3a3a3a" stroke-width="1.05"/></svg>
<div class="cb" style="left:837px;top:97px"></div>
<svg class="a" style="left:837px;top:97px" width="11" height="11" viewBox="0 0 11 11"><path d="M1.6 5.4L4.4 8.3L9.6 2.4" fill="none" stroke="#3a3a3a" stroke-width="1.05"/></svg>
<div class="cb" style="left:837px;top:110px"></div>
<svg class="a" style="left:837px;top:110px" width="11" height="11" viewBox="0 0 11 11"><path d="M1.6 5.4L4.4 8.3L9.6 2.4" fill="none" stroke="#3a3a3a" stroke-width="1.05"/></svg>
<div class="cb" style="left:837px;top:123px"></div>
<svg class="a" style="left:837px;top:123px" width="11" height="11" viewBox="0 0 11 11"><path d="M1.6 5.4L4.4 8.3L9.6 2.4" fill="none" stroke="#3a3a3a" stroke-width="1.05"/></svg>
<div class="cb" style="left:837px;top:136px"></div>
<div class="cb" style="left:837px;top:149px"></div>
<div class="cb" style="left:837px;top:162px"></div>
<div class="cb" style="left:837px;top:175px"></div>
<div class="cb" style="left:837px;top:188px"></div>
<div class="cb" style="left:837px;top:201px"></div>
<div class="a" style="left:833px;top:688px;width:149px;height:77px;background:#eaf0f9;border:1px solid #8c9096"></div>
<svg class="a" style="left:0;top:0;pointer-events:none" width="984" height="767" viewBox="0 0 984 767">
<text x="30.00" y="18.50" font-family="Liberation Sans" font-size="12" fill="#1a1a1a" textLength="450.50" lengthAdjust="spacingAndGlyphs">Macaos Simple PCB Editor - Product: C:\Users\Documents\MacaosGallery\186115.mif</text>
<text x="1.80" y="42.60" font-family="Liberation Sans" font-size="10.3" fill="#f6f6f2" textLength="97.60" lengthAdjust="spacing">Product operations</text>
<text x="1.80" y="135.80" font-family="Liberation Sans" font-size="10.3" fill="#f6f6f2" textLength="77.50" lengthAdjust="spacing">Edit operations</text>
<text x="13.50" y="88.70" font-family="Liberation Sans" font-size="10.8" fill="#8c939c" textLength="23.80" lengthAdjust="spacingAndGlyphs">Save</text>
<text x="58.50" y="88.70" font-family="Liberation Sans" font-size="10.8" fill="#111" textLength="18.40" lengthAdjust="spacing">Exit</text>
<text x="224.50" y="88.50" font-family="Liberation Sans" font-size="10.8" fill="#111" textLength="20.40" lengthAdjust="spacingAndGlyphs">Help</text>
<text x="30.50" y="113.00" font-family="Liberation Sans" font-size="10.8" fill="#111" textLength="54.50" lengthAdjust="spacing">MIF History</text>
<text x="124.70" y="113.50" font-family="Liberation Sans" font-size="10.8" fill="#111" textLength="53.20" lengthAdjust="spacingAndGlyphs">Change log</text>
<text x="211.60" y="107.00" font-family="Liberation Sans" font-size="10.8" fill="#6e7a90" textLength="25.40" lengthAdjust="spacingAndGlyphs">Show</text>
<text x="211.60" y="118.80" font-family="Liberation Sans" font-size="10.8" fill="#6e7a90" textLength="39.70" lengthAdjust="spacing">highlight</text>
<text x="8.60" y="181.40" font-family="Liberation Sans" font-size="10.8" fill="#111" textLength="31.70" lengthAdjust="spacingAndGlyphs">Details</text>
<text x="54.40" y="181.40" font-family="Liberation Sans" font-size="10.8" fill="#111" textLength="22.90" lengthAdjust="spacing">Crop</text>
<text x="92.50" y="181.40" font-family="Liberation Sans" font-size="10.8" fill="#111" textLength="30.40" lengthAdjust="spacingAndGlyphs">Delete</text>
<text x="133.70" y="181.20" font-family="Liberation Sans" font-size="10.8" fill="#111" textLength="33.60" lengthAdjust="spacingAndGlyphs">Symbol</text>
<text x="181.70" y="181.20" font-family="Liberation Sans" font-size="10.8" fill="#111" textLength="20.60" lengthAdjust="spacingAndGlyphs">DRC</text>
<text x="6.90" y="202.70" font-family="Liberation Sans" font-size="10.8" fill="#111" textLength="38.10" lengthAdjust="spacing">Contour</text>
<text x="57.50" y="204.30" font-family="Liberation Sans" font-size="10.8" fill="#111" textLength="16.50" lengthAdjust="spacingAndGlyphs">Drill</text>
<text x="99.70" y="204.30" font-family="Liberation Sans" font-size="10.8" fill="#111" textLength="31.70" lengthAdjust="spacingAndGlyphs">Layers</text>
<text x="143.60" y="204.30" font-family="Liberation Sans" font-size="10.8" fill="#111" textLength="31.30" lengthAdjust="spacingAndGlyphs">Details</text>
<text x="187.40" y="204.30" font-family="Liberation Sans" font-size="10.8" fill="#111" textLength="25.60" lengthAdjust="spacingAndGlyphs">Holes</text>
<text x="21.10" y="228.80" font-family="Liberation Sans" font-size="10.8" fill="#111" textLength="19.20" lengthAdjust="spacingAndGlyphs">Tool</text>
<text x="64.50" y="228.80" font-family="Liberation Sans" font-size="10.8" fill="#111" textLength="42.20" lengthAdjust="spacingAndGlyphs">Diameter</text>
<text x="148.70" y="228.80" font-family="Liberation Sans" font-size="10.8" fill="#111" textLength="63.50" lengthAdjust="spacing">Contour type</text>
<text x="12.50" y="247.50" font-family="Liberation Sans" font-size="10.8" fill="#111" textLength="11.90" lengthAdjust="spacing">90</text>
<text x="76.40" y="247.50" font-family="Liberation Sans" font-size="10.8" fill="#111" textLength="15.40" lengthAdjust="spacing">2,4</text>
<text x="117.20" y="247.50" font-family="Liberation Sans" font-size="10.8" fill="#111" textLength="109.10" lengthAdjust="spacing">Outer contour (profile)</text>
<text x="10.90" y="501.40" font-family="Liberation Sans" font-size="10.3" fill="#3f6fb2" textLength="97.10" lengthAdjust="spacing">Info: Contour tools</text>
<text x="27.50" y="515.80" font-family="Liberation Sans" font-size="10.8" fill="#111" textLength="195.50" lengthAdjust="spacingAndGlyphs">This module allows you to change certain</text>
<text x="27.50" y="528.80" font-family="Liberation Sans" font-size="10.8" fill="#111" textLength="174.90" lengthAdjust="spacing">properties of a single board product.</text>
<text x="27.50" y="541.80" font-family="Liberation Sans" font-size="10.8" fill="#111" textLength="41.70" lengthAdjust="spacing">You can:</text>
<text x="39.50" y="554.80" font-family="Liberation Sans" font-size="10.8" fill="#111" textLength="190.10" lengthAdjust="spacing">Change the diameter or slot plating of a</text>
<circle cx="30.8" cy="551.20" r="1.9" fill="#111"/>
<text x="27.50" y="567.80" font-family="Liberation Sans" font-size="10.8" fill="#111" textLength="57.80" lengthAdjust="spacing">contour tool</text>
<text x="39.50" y="580.80" font-family="Liberation Sans" font-size="10.8" fill="#111" textLength="212.20" lengthAdjust="spacing">Change the diameter, plating, or purpose of</text>
<circle cx="30.8" cy="577.20" r="1.9" fill="#111"/>
<text x="27.50" y="593.80" font-family="Liberation Sans" font-size="10.8" fill="#111" textLength="46.20" lengthAdjust="spacing">a drill tool</text>
<text x="39.50" y="606.80" font-family="Liberation Sans" font-size="10.8" fill="#111" textLength="197.30" lengthAdjust="spacing">Change the extent (depth) of a drill layer</text>
<circle cx="30.8" cy="603.20" r="1.9" fill="#111"/>
<text x="39.50" y="619.80" font-family="Liberation Sans" font-size="10.8" fill="#111" textLength="113.80" lengthAdjust="spacingAndGlyphs">Reassign a copper layer</text>
<circle cx="30.8" cy="616.20" r="1.9" fill="#111"/>
<text x="39.50" y="632.80" font-family="Liberation Sans" font-size="10.8" fill="#111" textLength="179.20" lengthAdjust="spacing">Change the polarity of a copper layer</text>
<circle cx="30.8" cy="629.20" r="1.9" fill="#111"/>
<text x="39.50" y="645.80" font-family="Liberation Sans" font-size="10.8" fill="#111" textLength="147.10" lengthAdjust="spacing">Change the style of a via layer</text>
<circle cx="30.8" cy="642.20" r="1.9" fill="#111"/>
<text x="39.50" y="658.80" font-family="Liberation Sans" font-size="10.8" fill="#111" textLength="73.50" lengthAdjust="spacingAndGlyphs">Replace a layer</text>
<circle cx="30.8" cy="655.20" r="1.9" fill="#111"/>
<text x="39.50" y="671.80" font-family="Liberation Sans" font-size="10.8" fill="#111" textLength="188.40" lengthAdjust="spacing">Delete all features outside of the board</text>
<circle cx="30.8" cy="668.20" r="1.9" fill="#111"/>
<text x="39.50" y="684.80" font-family="Liberation Sans" font-size="10.8" fill="#111" textLength="117.50" lengthAdjust="spacing">Delete selected features</text>
<circle cx="30.8" cy="681.20" r="1.9" fill="#111"/>
<text x="39.50" y="697.80" font-family="Liberation Sans" font-size="10.8" fill="#111" textLength="198.70" lengthAdjust="spacingAndGlyphs">Add symbols to the legend or solder mask</text>
<circle cx="30.8" cy="694.20" r="1.9" fill="#111"/>
<text x="27.50" y="710.80" font-family="Liberation Sans" font-size="10.8" fill="#111" textLength="28.50" lengthAdjust="spacing">layers</text>
<text x="839.50" y="46.00" font-family="Liberation Sans" font-size="10.8" fill="#111" textLength="43.50" lengthAdjust="spacing">Contents</text>
<text x="895.60" y="47.50" font-family="Liberation Sans" font-size="10.8" fill="#111" textLength="54.20" lengthAdjust="spacingAndGlyphs">Viewer help</text>
<text x="851.50" y="68.40" font-family="Liberation Sans" font-size="10.8" fill="#111" textLength="63.00" lengthAdjust="spacing">Board outline</text>
<text x="851.50" y="81.40" font-family="Liberation Sans" font-size="10.8" fill="#111" textLength="28.50" lengthAdjust="spacing">Route</text>
<text x="851.50" y="94.40" font-family="Liberation Sans" font-size="10.8" fill="#111" textLength="57.50" lengthAdjust="spacing">Drill through</text>
<text x="851.50" y="107.40" font-family="Liberation Sans" font-size="10.8" fill="#111" textLength="53.40" lengthAdjust="spacing">Legend top</text>
<text x="851.50" y="120.40" font-family="Liberation Sans" font-size="10.8" fill="#111" textLength="75.50" lengthAdjust="spacingAndGlyphs">Solder mask top</text>
<text x="851.50" y="133.40" font-family="Liberation Sans" font-size="10.8" fill="#111" textLength="53.40" lengthAdjust="spacing">Copper top</text>
<text x="851.50" y="146.40" font-family="Liberation Sans" font-size="10.8" fill="#111" textLength="71.90" lengthAdjust="spacing">Copper bottom</text>
<text x="851.50" y="159.40" font-family="Liberation Sans" font-size="10.8" fill="#111" textLength="93.50" lengthAdjust="spacingAndGlyphs">Solder mask bottom</text>
<text x="851.50" y="172.40" font-family="Liberation Sans" font-size="10.8" fill="#111" textLength="71.30" lengthAdjust="spacing">Legend bottom</text>
<text x="851.50" y="185.40" font-family="Liberation Sans" font-size="10.8" fill="#111" textLength="72.80" lengthAdjust="spacingAndGlyphs">Paste mask top</text>
<text x="851.50" y="198.40" font-family="Liberation Sans" font-size="10.8" fill="#111" textLength="90.50" lengthAdjust="spacingAndGlyphs">Paste mask bottom</text>
<text x="851.50" y="211.40" font-family="Liberation Sans" font-size="10.8" fill="#111" textLength="79.50" lengthAdjust="spacing">Board (previous)</text>
<text x="836.30" y="701.00" font-family="Liberation Sans" font-size="11.2" fill="#111" textLength="71.30" lengthAdjust="spacing">PublishInfo.txt</text>
<text x="836.30" y="714.00" font-family="Liberation Sans" font-size="11.2" fill="#111" textLength="58.90" lengthAdjust="spacing">fresedim.txt</text>
<text x="836.30" y="727.00" font-family="Liberation Sans" font-size="11.2" fill="#111" textLength="97.40" lengthAdjust="spacingAndGlyphs">StackupDrawing.pdf</text>
<text x="836.30" y="740.00" font-family="Liberation Sans" font-size="11.2" fill="#111" textLength="74.10" lengthAdjust="spacingAndGlyphs">BoardSpecs.txt</text>
<text x="836.30" y="753.00" font-family="Liberation Sans" font-size="11.2" fill="#111" textLength="74.10" lengthAdjust="spacingAndGlyphs">BoardSpecs.txt</text>
<text x="314.30" y="760.70" font-family="Liberation Sans" font-size="10.8" fill="#1a1a1a" textLength="57.70" lengthAdjust="spacingAndGlyphs">Normal view</text>
<text x="436.70" y="760.70" font-family="Liberation Sans" font-size="10.8" fill="#1a1a1a" textLength="15.60" lengthAdjust="spacingAndGlyphs">mm</text>
<text x="641.00" y="760.70" font-family="Liberation Sans" font-size="10.8" fill="#1a1a1a" textLength="132.70" lengthAdjust="spacing">43,00*90,00 mm=0,39 dm²</text>
</svg>
<div class="a" style="left:982px;top:31px;width:2px;height:736px;background:linear-gradient(90deg,#8e9093,#b4b6b9)"></div>
</body></html>
